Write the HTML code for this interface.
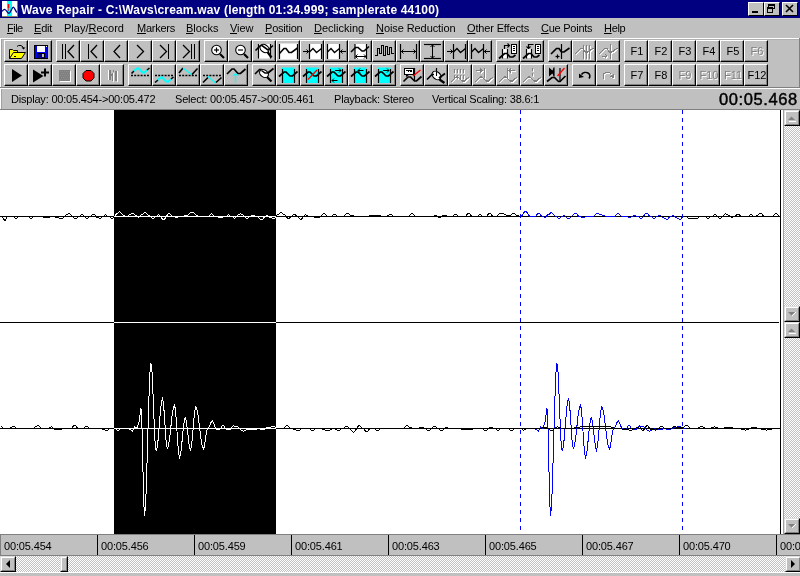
<!DOCTYPE html><html><head><meta charset="utf-8"><style>
*{margin:0;padding:0;box-sizing:border-box}
html,body{width:800px;height:576px;overflow:hidden;background:#c0c0c0;font-family:"Liberation Sans",sans-serif;font-size:11px;color:#000}
.a{position:absolute}
.t{position:absolute;white-space:nowrap;line-height:1;will-change:transform}
.btn{position:absolute;width:24px;height:22px;background:#c0c0c0;border-top:1px solid #fff;border-left:1px solid #fff;border-right:1px solid #000;border-bottom:1px solid #000}
.btn:after{content:"";position:absolute;left:0;top:0;right:0;bottom:0;border-right:1px solid #808080;border-bottom:1px solid #808080}
.btn svg{position:absolute;left:0;top:0}
.btn div{will-change:transform}
.chk{background-color:#fff;background-image:linear-gradient(45deg,#c0c0c0 25%,transparent 25%,transparent 75%,#c0c0c0 75%),linear-gradient(45deg,#c0c0c0 25%,transparent 25%,transparent 75%,#c0c0c0 75%);background-size:2px 2px;background-position:0 0,1px 1px}
.sb{position:absolute;width:16px;height:16px;background:#c0c0c0;border-top:1px solid #dfdfdf;border-left:1px solid #dfdfdf;border-right:1px solid #000;border-bottom:1px solid #000}
.sb:before{content:"";position:absolute;left:0;top:0;right:0;bottom:0;border-top:1px solid #fff;border-left:1px solid #fff;border-right:1px solid #808080;border-bottom:1px solid #808080}
</style></head><body><div class="a" style="left:0;top:0;width:800px;height:18px;background:#000080"></div><svg class="a" style="left:2px;top:1px" width="16" height="16" viewBox="0 0 16 16"><rect x="0" y="0" width="16" height="16" fill="#fff"/><rect x="5" y="0" width="5" height="16" fill="#00ffff"/><path d="M0,10.5 C1,9 2,8.3 3,8.5 C4.5,9 5.5,12.3 7,12.3 C8.5,12.3 10,6.2 11.3,6.2 C12.5,6.2 13.5,10.5 15,11.5" stroke="#000080" fill="none" stroke-width="1.3"/><path d="M6.5,3 L6.5,7" stroke="#ff0000" stroke-width="1.6"/><path d="M6.5,7 L6.5,10" stroke="#c04040" stroke-width="0.8"/><rect x="15" y="0" width="1" height="16" fill="#808060"/><rect x="0" y="15" width="16" height="1" fill="#808060"/></svg><div class="t" style="left:21px;top:4px;color:#fff;font-weight:bold;font-size:12px;letter-spacing:0.18px">Wave Repair - C:\Wavs\cream.wav (length 01:34.999; samplerate 44100)</div><div class="a" style="left:748px;top:2px;width:16px;height:14px;background:#c0c0c0;border-top:1px solid #fff;border-left:1px solid #fff;border-right:1px solid #000;border-bottom:1px solid #000"></div><div class="a" style="left:764px;top:2px;width:16px;height:14px;background:#c0c0c0;border-top:1px solid #fff;border-left:1px solid #fff;border-right:1px solid #000;border-bottom:1px solid #000"></div><div class="a" style="left:782px;top:2px;width:16px;height:14px;background:#c0c0c0;border-top:1px solid #fff;border-left:1px solid #fff;border-right:1px solid #000;border-bottom:1px solid #000"></div><div class="a" style="left:752px;top:11px;width:6px;height:2px;background:#000"></div><svg class="a" style="left:766px;top:4px" width="12" height="10" shape-rendering="crispEdges"><rect x="2" y="0" width="7" height="2" fill="#000"/><rect x="8" y="2" width="1" height="3" fill="#000"/><rect x="2" y="2" width="1" height="1" fill="#000"/><rect x="7" y="4" width="1" height="1" fill="#000"/><rect x="1" y="3" width="6" height="6" fill="#c0c0c0"/><rect x="1" y="3" width="6" height="2" fill="#000"/><rect x="1" y="5" width="1" height="4" fill="#000"/><rect x="6" y="5" width="1" height="4" fill="#000"/><rect x="1" y="8" width="6" height="1" fill="#000"/></svg><svg class="a" style="left:785px;top:4px" width="10" height="10"><path d="M1,1 L8,8 M8,1 L1,8" stroke="#000" stroke-width="1.6"/></svg><div class="t" style="left:7px;top:23px;letter-spacing:-0.5px"><u>F</u>ile</div><div class="t" style="left:34px;top:23px;letter-spacing:-0.2px"><u>E</u>dit</div><div class="t" style="left:64px;top:23px;letter-spacing:0px">Play/<u>R</u>ecord</div><div class="t" style="left:137px;top:23px;letter-spacing:-0.25px"><u>M</u>arkers</div><div class="t" style="left:186px;top:23px;letter-spacing:0px"><u>B</u>locks</div><div class="t" style="left:230px;top:23px;letter-spacing:-0.1px"><u>V</u>iew</div><div class="t" style="left:265px;top:23px;letter-spacing:-0.2px"><u>P</u>osition</div><div class="t" style="left:314px;top:23px;letter-spacing:0px"><u>D</u>eclicking</div><div class="t" style="left:376px;top:23px;letter-spacing:-0.08px"><u>N</u>oise Reduction</div><div class="t" style="left:467px;top:23px;letter-spacing:-0.15px"><u>O</u>ther Effects</div><div class="t" style="left:541px;top:23px;letter-spacing:-0.25px"><u>C</u>ue Points</div><div class="t" style="left:604px;top:23px;letter-spacing:-0.3px"><u>H</u>elp</div><div class="a" style="left:0;top:38px;width:800px;height:1px;background:#fff"></div><div class="a" style="left:1px;top:39px;width:798px;height:1px;background:#b0b0b0"></div><div class="a" style="left:0;top:38px;width:1px;height:72px;background:#fff"></div><div class="a" style="left:1px;top:39px;width:1px;height:71px;background:#a0a0a0"></div><div class="a" style="left:0;top:87px;width:800px;height:1px;background:#808080"></div><div class="a" style="left:0;top:88px;width:800px;height:1px;background:#fff"></div><div class="a" style="left:0;top:109px;width:800px;height:1px;background:#808080"></div><div class="a" style="left:799px;top:38px;width:1px;height:50px;background:#808080"></div><div class="btn" style="left:4px;top:40px"><svg style="position:absolute;left:-1px;top:-1px" width="24" height="22" viewBox="0 0 24 22"><polygon points="5.5,9.5 8.5,9.5 9.5,10.5 13.5,10.5 13.5,12.5 9.5,12.5 5.5,17.5" fill="#ffff00"/><polygon points="9.5,12.5 21.5,12.5 17.5,18.5 5.5,18.5" fill="#ffff00"/><polyline points="5.5,18.5 5.5,9.5 8.5,9.5 9.5,10.5 13.5,10.5 13.5,12.5" fill="none" stroke="#000" stroke-width="1" stroke-linejoin="miter" /><polyline points="5.5,18.5 9.5,12.5 21.5,12.5 17.5,18.5 5.5,18.5" fill="none" stroke="#000" stroke-width="1" stroke-linejoin="miter" /><rect x="10" y="16" width="2" height="1" fill="#000"/><polyline points="13,6.5 14.5,5.5 17,5.5 19,7 19.5,8.5" fill="none" stroke="#000" stroke-width="1" stroke-linejoin="miter" /><polygon points="17.5,7.5 21.5,7.5 19.5,9.5" fill="#000"/></svg></div><div class="btn" style="left:28px;top:40px"><svg style="position:absolute;left:-1px;top:-1px" width="24" height="22" viewBox="0 0 24 22" shape-rendering="crispEdges"><rect x="6" y="5" width="14" height="14" fill="#000"/><rect x="7" y="6" width="12" height="12" fill="#0000ff"/><rect x="9" y="6" width="8" height="6" fill="#fff"/><rect x="18" y="6" width="1" height="1" fill="#fff"/><rect x="9" y="13" width="8" height="5" fill="#000"/><rect x="10" y="14" width="6" height="4" fill="#000080"/><rect x="14" y="14" width="2" height="3" fill="#c0c0c0"/></svg></div><div class="btn" style="left:56px;top:40px"><svg style="position:absolute;left:-1px;top:-1px" width="24" height="22" viewBox="0 0 24 22" shape-rendering="crispEdges"><rect x="6" y="4" width="1" height="15" fill="#000"/><rect x="9" y="4" width="1" height="15" fill="#000"/><polyline points="18,5 12,11.5 18,18" fill="none" stroke="#000" stroke-width="1.3" stroke-linejoin="miter"  shape-rendering="auto"/></svg></div><div class="btn" style="left:80px;top:40px"><svg style="position:absolute;left:-1px;top:-1px" width="24" height="22" viewBox="0 0 24 22" shape-rendering="crispEdges"><rect x="8" y="4" width="1" height="15" fill="#000"/><polyline points="17,5 11,11.5 17,18" fill="none" stroke="#000" stroke-width="1.3" stroke-linejoin="miter"  shape-rendering="auto"/></svg></div><div class="btn" style="left:104px;top:40px"><svg style="position:absolute;left:-1px;top:-1px" width="24" height="22" viewBox="0 0 24 22"><polyline points="16,5 10,11.5 16,18" fill="none" stroke="#000" stroke-width="1.3" stroke-linejoin="miter" /></svg></div><div class="btn" style="left:128px;top:40px"><svg style="position:absolute;left:-1px;top:-1px" width="24" height="22" viewBox="0 0 24 22"><polyline points="9,5 15.5,11.5 9,18" fill="none" stroke="#000" stroke-width="1.3" stroke-linejoin="miter" /></svg></div><div class="btn" style="left:152px;top:40px"><svg style="position:absolute;left:-1px;top:-1px" width="24" height="22" viewBox="0 0 24 22" shape-rendering="crispEdges"><rect x="16" y="4" width="1" height="15" fill="#000"/><polyline points="8,5 14.5,11.5 8,18" fill="none" stroke="#000" stroke-width="1.3" stroke-linejoin="miter"  shape-rendering="auto"/></svg></div><div class="btn" style="left:176px;top:40px"><svg style="position:absolute;left:-1px;top:-1px" width="24" height="22" viewBox="0 0 24 22" shape-rendering="crispEdges"><rect x="15" y="4" width="1" height="15" fill="#000"/><rect x="18" y="4" width="1" height="15" fill="#000"/><polyline points="7,5 13.5,11.5 7,18" fill="none" stroke="#000" stroke-width="1.3" stroke-linejoin="miter"  shape-rendering="auto"/></svg></div><div class="btn" style="left:204px;top:40px"><svg style="position:absolute;left:-1px;top:-1px" width="24" height="22" viewBox="0 0 24 22"><circle cx="12.5" cy="10" r="4.8" fill="#fff" stroke="#000" stroke-width="1.1"/><line x1="16" y1="14" x2="20" y2="18" stroke="#000" stroke-width="2.2" /><line x1="10" y1="10" x2="15" y2="10" stroke="#000" stroke-width="1.2" /><line x1="12.5" y1="7.5" x2="12.5" y2="12.5" stroke="#000" stroke-width="1.2" /></svg></div><div class="btn" style="left:228px;top:40px"><svg style="position:absolute;left:-1px;top:-1px" width="24" height="22" viewBox="0 0 24 22"><circle cx="12.5" cy="10" r="4.8" fill="#fff" stroke="#000" stroke-width="1.1"/><line x1="16" y1="14" x2="20" y2="18" stroke="#000" stroke-width="2.2" /><line x1="10" y1="10" x2="15" y2="10" stroke="#000" stroke-width="1.2" /></svg></div><div class="btn" style="left:252px;top:40px"><svg style="position:absolute;left:-1px;top:-1px" width="24" height="22" viewBox="0 0 24 22"><rect x="6.5" y="4" width="12" height="14.5" fill="#fff"/><line x1="6.5" y1="4" x2="6.5" y2="18.5" stroke="#000" stroke-width="1.2" /><line x1="18.5" y1="4" x2="18.5" y2="18.5" stroke="#000" stroke-width="1.2" /><ellipse cx="12.5" cy="8.5" rx="5" ry="3.6" transform="rotate(35 12.5 8.5)" fill="none" stroke="#000" stroke-width="1.1"/><polyline points="3.5,10.5 8.5,5.5 10,5.5 16,10 21,5.5" fill="none" stroke="#000" stroke-width="1.6" stroke-linejoin="miter" /><line x1="15.5" y1="12" x2="19.5" y2="17.5" stroke="#000" stroke-width="2.2" /></svg></div><div class="btn" style="left:276px;top:40px"><svg style="position:absolute;left:-1px;top:-1px" width="24" height="22" viewBox="0 0 24 22"><rect x="3.5" y="3.5" width="18.5" height="16" fill="#fff"/><line x1="3.5" y1="4" x2="3.5" y2="19" stroke="#000" stroke-width="1.2" /><line x1="21.5" y1="4" x2="21.5" y2="19" stroke="#000" stroke-width="1.2" /><polyline points="3.5,13.5 8,8.5 10,8.5 13,12.5 15.5,12.5 21.5,8" fill="none" stroke="#000" stroke-width="1.6" stroke-linejoin="miter" /></svg></div><div class="btn" style="left:300px;top:40px"><svg style="position:absolute;left:-1px;top:-1px" width="24" height="22" viewBox="0 0 24 22"><rect x="9.5" y="4" width="12" height="15" fill="#fff"/><line x1="9.5" y1="4" x2="9.5" y2="19" stroke="#000" stroke-width="1.2" /><line x1="21.5" y1="4" x2="21.5" y2="19" stroke="#000" stroke-width="1.2" /><polyline points="9.5,12 13,8.5 16.5,12.5 21.5,8.5" fill="none" stroke="#000" stroke-width="1.4" stroke-linejoin="miter" /><line x1="3" y1="11.5" x2="9" y2="11.5" stroke="#000" stroke-width="1.1" /><polyline points="6.5,9.5 8.5,11.5 6.5,13.5" fill="none" stroke="#000" stroke-width="1" stroke-linejoin="miter" /></svg></div><div class="btn" style="left:324px;top:40px"><svg style="position:absolute;left:-1px;top:-1px" width="24" height="22" viewBox="0 0 24 22"><rect x="3.5" y="4" width="12" height="15" fill="#fff"/><line x1="3.5" y1="4" x2="3.5" y2="19" stroke="#000" stroke-width="1.2" /><line x1="15.5" y1="4" x2="15.5" y2="19" stroke="#000" stroke-width="1.2" /><polyline points="3.5,12 7,8.5 10.5,12.5 15.5,8.5" fill="none" stroke="#000" stroke-width="1.4" stroke-linejoin="miter" /><line x1="16" y1="11.5" x2="22" y2="11.5" stroke="#000" stroke-width="1.1" /><polyline points="18.5,9.5 16.5,11.5 18.5,13.5" fill="none" stroke="#000" stroke-width="1" stroke-linejoin="miter" /></svg></div><div class="btn" style="left:348px;top:40px"><svg style="position:absolute;left:-1px;top:-1px" width="24" height="22" viewBox="0 0 24 22"><rect x="7" y="4" width="11.5" height="15" fill="#fff"/><line x1="7" y1="4" x2="7" y2="19" stroke="#000" stroke-width="1.2" /><line x1="18.5" y1="4" x2="18.5" y2="19" stroke="#000" stroke-width="1.2" /><polyline points="3,12 7.5,7.5 10,7.5 14,11 16,11 21,6.5" fill="none" stroke="#000" stroke-width="1.6" stroke-linejoin="miter" /><line x1="7.5" y1="16.5" x2="18" y2="16.5" stroke="#000" stroke-width="1" /><polyline points="9.5,14.5 7.5,16.5 9.5,18.5" fill="none" stroke="#000" stroke-width="1" stroke-linejoin="miter" /><polyline points="16,14.5 18,16.5 16,18.5" fill="none" stroke="#000" stroke-width="1" stroke-linejoin="miter" /></svg></div><div class="btn" style="left:372px;top:40px"><svg style="position:absolute;left:-1px;top:-1px" width="24" height="22" viewBox="0 0 24 22" shape-rendering="crispEdges"><polyline points="3,15.5 5.5,15.5 5.5,8.5 7.5,8.5 7.5,13.5 9.5,13.5 9.5,5.5 11.5,5.5 11.5,15.5 13.5,15.5 13.5,6.5 15.5,6.5 15.5,14.5 17.5,14.5 17.5,7.5 19.5,7.5 19.5,13.5 22,13.5" fill="none" stroke="#000" stroke-width="1" stroke-linejoin="miter" /></svg></div><div class="btn" style="left:396px;top:40px"><svg style="position:absolute;left:-1px;top:-1px" width="24" height="22" viewBox="0 0 24 22"><line x1="4.5" y1="4" x2="4.5" y2="19" stroke="#000" stroke-width="1.2" /><line x1="20.5" y1="4" x2="20.5" y2="19" stroke="#000" stroke-width="1.2" /><line x1="5" y1="11.5" x2="20" y2="11.5" stroke="#000" stroke-width="1" /><polyline points="7.5,9.5 5.5,11.5 7.5,13.5" fill="none" stroke="#000" stroke-width="1" stroke-linejoin="miter" /><polyline points="17.5,9.5 19.5,11.5 17.5,13.5" fill="none" stroke="#000" stroke-width="1" stroke-linejoin="miter" /></svg></div><div class="btn" style="left:420px;top:40px"><svg style="position:absolute;left:-1px;top:-1px" width="24" height="22" viewBox="0 0 24 22"><line x1="4" y1="4.5" x2="21" y2="4.5" stroke="#000" stroke-width="1.2" /><line x1="4" y1="18.5" x2="21" y2="18.5" stroke="#000" stroke-width="1.2" /><line x1="12.5" y1="5" x2="12.5" y2="18" stroke="#000" stroke-width="1" /><polyline points="10.5,7 12.5,5 14.5,7" fill="none" stroke="#000" stroke-width="1" stroke-linejoin="miter" /><polyline points="10.5,16 12.5,18 14.5,16" fill="none" stroke="#000" stroke-width="1" stroke-linejoin="miter" /></svg></div><div class="btn" style="left:444px;top:40px"><svg style="position:absolute;left:-1px;top:-1px" width="24" height="22" viewBox="0 0 24 22"><line x1="9.5" y1="4" x2="9.5" y2="19" stroke="#000" stroke-width="1.2" /><line x1="21.5" y1="4" x2="21.5" y2="19" stroke="#000" stroke-width="1.2" /><polyline points="9.5,12 13,8.5 16.5,12.5 21.5,8.5" fill="none" stroke="#000" stroke-width="1.4" stroke-linejoin="miter" /><line x1="3" y1="11.5" x2="9" y2="11.5" stroke="#000" stroke-width="1.1" /><polyline points="6.5,9.5 8.5,11.5 6.5,13.5" fill="none" stroke="#000" stroke-width="1" stroke-linejoin="miter" /></svg></div><div class="btn" style="left:468px;top:40px"><svg style="position:absolute;left:-1px;top:-1px" width="24" height="22" viewBox="0 0 24 22"><line x1="3.5" y1="4" x2="3.5" y2="19" stroke="#000" stroke-width="1.2" /><line x1="15.5" y1="4" x2="15.5" y2="19" stroke="#000" stroke-width="1.2" /><polyline points="3.5,12 7,8.5 10.5,12.5 15.5,8.5" fill="none" stroke="#000" stroke-width="1.4" stroke-linejoin="miter" /><line x1="16" y1="11.5" x2="22" y2="11.5" stroke="#000" stroke-width="1.1" /><polyline points="18.5,9.5 16.5,11.5 18.5,13.5" fill="none" stroke="#000" stroke-width="1" stroke-linejoin="miter" /></svg></div><div class="btn" style="left:496px;top:40px"><svg style="position:absolute;left:-1px;top:-1px" width="24" height="22" viewBox="0 0 24 22"><rect x="15" y="4" width="6" height="10" fill="#000"/><rect x="16" y="5" width="4" height="8" fill="#fff"/><rect x="17" y="6" width="2" height="1" fill="#000"/><rect x="17" y="8" width="2" height="1" fill="#000"/><rect x="17" y="10" width="2" height="1" fill="#000"/><rect x="6.5" y="9" width="5" height="9" fill="#fff"/><line x1="6.5" y1="9" x2="6.5" y2="18.5" stroke="#000" stroke-width="1.2" /><line x1="11.5" y1="9" x2="11.5" y2="18.5" stroke="#000" stroke-width="1.2" /><polyline points="3,18.5 8.5,13.5 11,13.5 14,17 17,17 19.5,15" fill="none" stroke="#000" stroke-width="1.7" stroke-linejoin="miter" /><polyline points="8.5,9 8.5,5.5 13.5,5.5" fill="none" stroke="#000" stroke-width="1.2" stroke-linejoin="miter" /><polyline points="11.5,3.5 13.5,5.5 11.5,7.5" fill="none" stroke="#000" stroke-width="1.1" stroke-linejoin="miter" /></svg></div><div class="btn" style="left:520px;top:40px"><svg style="position:absolute;left:-1px;top:-1px" width="24" height="22" viewBox="0 0 24 22"><rect x="15" y="4" width="6" height="10" fill="#000"/><rect x="16" y="5" width="4" height="8" fill="#fff"/><rect x="17" y="6" width="2" height="1" fill="#000"/><rect x="17" y="8" width="2" height="1" fill="#000"/><rect x="17" y="10" width="2" height="1" fill="#000"/><rect x="6.5" y="9" width="5" height="9" fill="#fff"/><line x1="6.5" y1="9" x2="6.5" y2="18.5" stroke="#000" stroke-width="1.2" /><line x1="11.5" y1="9" x2="11.5" y2="18.5" stroke="#000" stroke-width="1.2" /><polyline points="3,18.5 8.5,13.5 11,13.5 14,17 17,17 19.5,15" fill="none" stroke="#000" stroke-width="1.7" stroke-linejoin="miter" /><polyline points="13.5,4.5 8.5,4.5 8.5,8.5" fill="none" stroke="#000" stroke-width="1.2" stroke-linejoin="miter" /><polyline points="6.5,6.5 8.5,8.5 10.5,6.5" fill="none" stroke="#000" stroke-width="1.1" stroke-linejoin="miter" /></svg></div><div class="btn" style="left:548px;top:40px"><svg style="position:absolute;left:-1px;top:-1px" width="24" height="22" viewBox="0 0 24 22"><polyline points="3,14 8.5,8.5 11,8.5 13.5,12 16,12 21.5,8" fill="none" stroke="#000" stroke-width="1.7" stroke-linejoin="miter" /><line x1="13.5" y1="4" x2="13.5" y2="19" stroke="#000" stroke-width="1.2" /><line x1="7.5" y1="16.5" x2="11.5" y2="16.5" stroke="#000" stroke-width="1.2" /><line x1="9.5" y1="14.5" x2="9.5" y2="18.5" stroke="#000" stroke-width="1.2" /></svg></div><div class="btn" style="left:572px;top:40px"><svg style="position:absolute;left:-1px;top:-1px" width="24" height="22" viewBox="0 0 24 22" shape-rendering="crispEdges"><polyline points="4,15 9.5,9.5 12,9.5 14.5,13 17,13 22.5,9" fill="none" stroke="#fff" stroke-width="1.1" stroke-linejoin="miter" /><line x1="12" y1="6" x2="12" y2="20" stroke="#fff" stroke-width="1" /><line x1="15" y1="6" x2="15" y2="20" stroke="#fff" stroke-width="1" /><line x1="18" y1="6" x2="18" y2="20" stroke="#fff" stroke-width="1" /><polyline points="3,14 8.5,8.5 11,8.5 13.5,12 16,12 21.5,8" fill="none" stroke="#808080" stroke-width="1.1" stroke-linejoin="miter" /><line x1="11" y1="5" x2="11" y2="19" stroke="#808080" stroke-width="1" /><line x1="14" y1="5" x2="14" y2="19" stroke="#808080" stroke-width="1" /><line x1="17" y1="5" x2="17" y2="19" stroke="#808080" stroke-width="1" /></svg></div><div class="btn" style="left:596px;top:40px"><svg style="position:absolute;left:-1px;top:-1px" width="24" height="22" viewBox="0 0 24 22" shape-rendering="crispEdges"><polyline points="4,15 9.5,9.5 12,9.5 14.5,13 17,13 22.5,9" fill="none" stroke="#fff" stroke-width="1.1" stroke-linejoin="miter" /><line x1="15" y1="5" x2="15" y2="20" stroke="#fff" stroke-width="1" /><line x1="7" y1="17" x2="12" y2="17" stroke="#fff" stroke-width="1" /><polyline points="10,15 12,17 10,19" fill="none" stroke="#fff" stroke-width="1" stroke-linejoin="miter" /><polyline points="3,14 8.5,8.5 11,8.5 13.5,12 16,12 21.5,8" fill="none" stroke="#808080" stroke-width="1.1" stroke-linejoin="miter" /><line x1="14" y1="4" x2="14" y2="19" stroke="#808080" stroke-width="1" /><line x1="6" y1="16" x2="11" y2="16" stroke="#808080" stroke-width="1" /><polyline points="9,14 11,16 9,18" fill="none" stroke="#808080" stroke-width="1" stroke-linejoin="miter" /></svg></div><div class="btn" style="left:624px;top:40px"><div style="position:absolute;left:0;top:4px;width:24px;text-align:center">F1</div></div><div class="btn" style="left:648px;top:40px"><div style="position:absolute;left:0;top:4px;width:24px;text-align:center">F2</div></div><div class="btn" style="left:672px;top:40px"><div style="position:absolute;left:0;top:4px;width:24px;text-align:center">F3</div></div><div class="btn" style="left:696px;top:40px"><div style="position:absolute;left:0;top:4px;width:24px;text-align:center">F4</div></div><div class="btn" style="left:720px;top:40px"><div style="position:absolute;left:0;top:4px;width:24px;text-align:center">F5</div></div><div class="btn" style="left:744px;top:40px"><div style="position:absolute;left:1px;top:5px;width:24px;text-align:center;color:#fff">F6</div><div style="position:absolute;left:0;top:4px;width:24px;text-align:center;color:#808080">F6</div></div><div class="btn" style="left:4px;top:64px"><svg style="position:absolute;left:-1px;top:-1px" width="24" height="22" viewBox="0 0 24 22"><polygon points="8,5 18,11.5 8,18" fill="#000"/></svg></div><div class="btn" style="left:28px;top:64px"><svg style="position:absolute;left:-1px;top:-1px" width="24" height="22" viewBox="0 0 24 22"><polygon points="5,5.5 15.5,12 5,18.5" fill="#000"/><line x1="13" y1="8.5" x2="21" y2="8.5" stroke="#000" stroke-width="2" /><line x1="17" y1="4.5" x2="17" y2="12.5" stroke="#000" stroke-width="2" /></svg></div><div class="btn" style="left:52px;top:64px"><svg style="position:absolute;left:-1px;top:-1px" width="24" height="22" viewBox="0 0 24 22" shape-rendering="crispEdges"><rect x="8" y="7" width="11" height="11" fill="#fff"/><rect x="7" y="6" width="11" height="11" fill="#808080"/><rect x="8" y="7" width="1" height="1" fill="#8e8e8e"/><rect x="9" y="9" width="1" height="1" fill="#8e8e8e"/><rect x="8" y="11" width="1" height="1" fill="#8e8e8e"/><rect x="9" y="13" width="1" height="1" fill="#8e8e8e"/><rect x="8" y="15" width="1" height="1" fill="#8e8e8e"/><rect x="10" y="7" width="1" height="1" fill="#8e8e8e"/><rect x="11" y="9" width="1" height="1" fill="#8e8e8e"/><rect x="10" y="11" width="1" height="1" fill="#8e8e8e"/><rect x="11" y="13" width="1" height="1" fill="#8e8e8e"/><rect x="10" y="15" width="1" height="1" fill="#8e8e8e"/><rect x="12" y="7" width="1" height="1" fill="#8e8e8e"/><rect x="13" y="9" width="1" height="1" fill="#8e8e8e"/><rect x="12" y="11" width="1" height="1" fill="#8e8e8e"/><rect x="13" y="13" width="1" height="1" fill="#8e8e8e"/><rect x="12" y="15" width="1" height="1" fill="#8e8e8e"/><rect x="14" y="7" width="1" height="1" fill="#8e8e8e"/><rect x="15" y="9" width="1" height="1" fill="#8e8e8e"/><rect x="14" y="11" width="1" height="1" fill="#8e8e8e"/><rect x="15" y="13" width="1" height="1" fill="#8e8e8e"/><rect x="14" y="15" width="1" height="1" fill="#8e8e8e"/><rect x="16" y="7" width="1" height="1" fill="#8e8e8e"/><rect x="17" y="9" width="1" height="1" fill="#8e8e8e"/><rect x="16" y="11" width="1" height="1" fill="#8e8e8e"/><rect x="17" y="13" width="1" height="1" fill="#8e8e8e"/><rect x="16" y="15" width="1" height="1" fill="#8e8e8e"/></svg></div><div class="btn" style="left:76px;top:64px"><svg style="position:absolute;left:-1px;top:-1px" width="24" height="22" viewBox="0 0 24 22"><polygon points="10,6.5 15,6.5 18,9.5 18,14 15,17 10,17 7,14 7,9.5" fill="#ff0000" stroke="#000" stroke-width="1"/></svg></div><div class="btn" style="left:100px;top:64px"><svg style="position:absolute;left:-1px;top:-1px" width="24" height="22" viewBox="0 0 24 22" shape-rendering="crispEdges"><rect x="8" y="6" width="1" height="10" fill="#fff"/><rect x="9" y="6" width="2" height="10" fill="#808080"/><rect x="12" y="9" width="1" height="8" fill="#808080"/><rect x="13" y="9" width="1" height="9" fill="#fff"/><rect x="11" y="10" width="1" height="2" fill="#808080"/><rect x="15" y="7" width="2" height="10" fill="#808080"/><rect x="17" y="7" width="1" height="11" fill="#fff"/><rect x="13" y="6" width="1" height="2" fill="#808080"/></svg></div><div class="btn" style="left:128px;top:64px"><svg style="position:absolute;left:-1px;top:-1px" width="24" height="22" viewBox="0 0 24 22"><line x1="3" y1="11.5" x2="22" y2="11.5" stroke="#000" stroke-width="1.4" stroke-dasharray="2 1.2"/><polyline points="3.5,9.5 6,7" fill="none" stroke="#000" stroke-width="1.6" stroke-linejoin="miter" /><polyline points="6,7 9,4.5 11,4.5 14.5,8.5 16.5,8.5 19,6" fill="none" stroke="#00ffff" stroke-width="2" stroke-linejoin="miter" /><polyline points="19,6 21.5,4" fill="none" stroke="#000" stroke-width="1.6" stroke-linejoin="miter" /></svg></div><div class="btn" style="left:152px;top:64px"><svg style="position:absolute;left:-1px;top:-1px" width="24" height="22" viewBox="0 0 24 22"><line x1="3" y1="11.5" x2="22" y2="11.5" stroke="#000" stroke-width="1.4" stroke-dasharray="2 1.2"/><polyline points="3,18.5 6,16" fill="none" stroke="#000" stroke-width="1.6" stroke-linejoin="miter" /><polyline points="6,16 8.5,13.5 10.5,13.5 14,17.5 16.5,17.5 19,15" fill="none" stroke="#00ffff" stroke-width="2" stroke-linejoin="miter" /><polyline points="19,15 21.5,13" fill="none" stroke="#000" stroke-width="1.6" stroke-linejoin="miter" /></svg></div><div class="btn" style="left:176px;top:64px"><svg style="position:absolute;left:-1px;top:-1px" width="24" height="22" viewBox="0 0 24 22"><line x1="3" y1="11.5" x2="22" y2="11.5" stroke="#000" stroke-width="1.4" stroke-dasharray="2 1.2"/><polyline points="3,9 7,4" fill="none" stroke="#000" stroke-width="1.6" stroke-linejoin="miter" /><polyline points="7,4 15.5,10.5" fill="none" stroke="#00ffff" stroke-width="1.2" stroke-linejoin="miter" /><polyline points="16,10.5 21.5,4.5" fill="none" stroke="#000" stroke-width="1.6" stroke-linejoin="miter" /></svg></div><div class="btn" style="left:200px;top:64px"><svg style="position:absolute;left:-1px;top:-1px" width="24" height="22" viewBox="0 0 24 22"><line x1="3" y1="11.5" x2="22" y2="11.5" stroke="#000" stroke-width="1.4" stroke-dasharray="2 1.2"/><polyline points="3,18.5 8,13.5" fill="none" stroke="#000" stroke-width="1.6" stroke-linejoin="miter" /><polyline points="8,12.5 15.5,19" fill="none" stroke="#00ffff" stroke-width="1.2" stroke-linejoin="miter" /><polyline points="16,18.5 21.5,13.5" fill="none" stroke="#000" stroke-width="1.6" stroke-linejoin="miter" /></svg></div><div class="btn" style="left:224px;top:64px"><svg style="position:absolute;left:-1px;top:-1px" width="24" height="22" viewBox="0 0 24 22"><polyline points="3,10 8,5 10,5 14,9.5 16.5,9.5 21.5,5" fill="none" stroke="#000" stroke-width="1.7" stroke-linejoin="miter" /><line x1="11.5" y1="9.5" x2="11.5" y2="18.5" stroke="#00ffff" stroke-width="1.3" /><polyline points="9,12 11.5,9.5 14,12" fill="none" stroke="#00ffff" stroke-width="1.2" stroke-linejoin="miter" /></svg></div><div class="btn" style="left:252px;top:64px"><svg style="position:absolute;left:-1px;top:-1px" width="24" height="22" viewBox="0 0 24 22"><polyline points="3,10 7.5,5.5 9.5,5.5 13,9 16,9 21.5,4.5" fill="none" stroke="#000" stroke-width="1.7" stroke-linejoin="miter" /><ellipse cx="12" cy="9.5" rx="4.8" ry="3.5" transform="rotate(35 12 9.5)" fill="#fff" stroke="#000" stroke-width="1.2"/><polyline points="9.5,6.5 13,9 16,9 19,6.5" fill="none" stroke="#000" stroke-width="1.5" stroke-linejoin="miter" /><line x1="15" y1="13" x2="19.5" y2="17.5" stroke="#000" stroke-width="2.2" /></svg></div><div class="btn" style="left:276px;top:64px"><svg style="position:absolute;left:-1px;top:-1px" width="24" height="22" viewBox="0 0 24 22"><rect x="6" y="3.5" width="12.5" height="15.5" fill="#00ffff"/><line x1="6.5" y1="5" x2="6.5" y2="19" stroke="#000" stroke-width="1.2" /><line x1="18.5" y1="5" x2="18.5" y2="19" stroke="#000" stroke-width="1.2" /><polyline points="3,12.5 8,8 10,8 14,12 16.5,12 21.5,7.5" fill="none" stroke="#000" stroke-width="1.7" stroke-linejoin="miter" /></svg></div><div class="btn" style="left:300px;top:64px"><svg style="position:absolute;left:-1px;top:-1px" width="24" height="22" viewBox="0 0 24 22"><rect x="6" y="3.5" width="12.5" height="15.5" fill="#00ffff"/><line x1="6.5" y1="5" x2="6.5" y2="19" stroke="#000" stroke-width="1.2" /><line x1="18.5" y1="5" x2="18.5" y2="19" stroke="#000" stroke-width="1.2" /><polyline points="3,12.5 8,8 10,8 14,12 16.5,12 21.5,7.5" fill="none" stroke="#000" stroke-width="1.7" stroke-linejoin="miter" /><line x1="8" y1="15.5" x2="17" y2="6" stroke="#ff0000" stroke-width="1.4" /></svg></div><div class="btn" style="left:324px;top:64px"><svg style="position:absolute;left:-1px;top:-1px" width="24" height="22" viewBox="0 0 24 22"><rect x="6" y="3.5" width="12.5" height="15.5" fill="#00ffff"/><line x1="6.5" y1="5" x2="6.5" y2="19" stroke="#000" stroke-width="1.2" /><line x1="18.5" y1="5" x2="18.5" y2="19" stroke="#000" stroke-width="1.2" /><polyline points="3,12.5 8,8 10,8 14,12 16.5,12 21.5,7.5" fill="none" stroke="#000" stroke-width="1.7" stroke-linejoin="miter" /><line x1="11" y1="6.5" x2="17" y2="6.5" stroke="#000" stroke-width="1" /><polyline points="15,4.5 17,6.5 15,8.5" fill="none" stroke="#000" stroke-width="1" stroke-linejoin="miter" /><line x1="8" y1="16.5" x2="13.5" y2="16.5" stroke="#000" stroke-width="1" /><polyline points="10,14.5 8,16.5 10,18.5" fill="none" stroke="#000" stroke-width="1" stroke-linejoin="miter" /></svg></div><div class="btn" style="left:348px;top:64px"><svg style="position:absolute;left:-1px;top:-1px" width="24" height="22" viewBox="0 0 24 22"><rect x="6" y="3.5" width="12.5" height="15.5" fill="#00ffff"/><line x1="6.5" y1="5" x2="6.5" y2="19" stroke="#000" stroke-width="1.2" /><line x1="18.5" y1="5" x2="18.5" y2="19" stroke="#000" stroke-width="1.2" /><polyline points="3,12.5 8,8 10,8 14,12 16.5,12 21.5,7.5" fill="none" stroke="#000" stroke-width="1.7" stroke-linejoin="miter" /><line x1="10" y1="6.5" x2="15.5" y2="6.5" stroke="#000" stroke-width="1" /><polyline points="12,4.5 10,6.5 12,8.5" fill="none" stroke="#000" stroke-width="1" stroke-linejoin="miter" /></svg></div><div class="btn" style="left:372px;top:64px"><svg style="position:absolute;left:-1px;top:-1px" width="24" height="22" viewBox="0 0 24 22"><rect x="6" y="3.5" width="12.5" height="15.5" fill="#00ffff"/><line x1="6.5" y1="5" x2="6.5" y2="19" stroke="#000" stroke-width="1.2" /><line x1="18.5" y1="5" x2="18.5" y2="19" stroke="#000" stroke-width="1.2" /><polyline points="3,12.5 8,8 10,8 14,12 16.5,12 21.5,7.5" fill="none" stroke="#000" stroke-width="1.7" stroke-linejoin="miter" /><line x1="11" y1="6.5" x2="17" y2="6.5" stroke="#000" stroke-width="1" /><polyline points="15,4.5 17,6.5 15,8.5" fill="none" stroke="#000" stroke-width="1" stroke-linejoin="miter" /></svg></div><div class="btn" style="left:400px;top:64px"><svg style="position:absolute;left:-1px;top:-1px" width="24" height="22" viewBox="0 0 24 22"><rect x="4" y="4" width="10" height="7" fill="#000"/><rect x="5" y="5" width="8" height="5" fill="#fff"/><rect x="6" y="6" width="1" height="1" fill="#000"/><rect x="8" y="7" width="1" height="1" fill="#000"/><rect x="10" y="7" width="2" height="1" fill="#000"/><rect x="7" y="6" width="5" height="1" fill="#000"/><polygon points="6,11 9,11 6,13" fill="#000"/><line x1="14.5" y1="4" x2="14.5" y2="17" stroke="#000" stroke-width="1.2" /><polyline points="3.5,17.5 8,13 10.5,13 14.5,17 16.5,17 21.5,12.5" fill="none" stroke="#000" stroke-width="1.7" stroke-linejoin="miter" /><line x1="13" y1="12" x2="20.5" y2="6" stroke="#ff0000" stroke-width="1.4" /></svg></div><div class="btn" style="left:424px;top:64px"><svg style="position:absolute;left:-1px;top:-1px" width="24" height="22" viewBox="0 0 24 22"><line x1="12.5" y1="4" x2="12.5" y2="12" stroke="#000" stroke-width="1.2" /><ellipse cx="12.5" cy="11.5" rx="5" ry="3.6" transform="rotate(40 12.5 11.5)" fill="#fff" stroke="#000" stroke-width="1.1"/><polyline points="3,15.5 8,10.5 10,10.5" fill="none" stroke="#000" stroke-width="1.7" stroke-linejoin="miter" /><line x1="12.5" y1="8" x2="12.5" y2="12" stroke="#000" stroke-width="1.1" /><polyline points="15,14 21,9.5" fill="none" stroke="#000" stroke-width="1.7" stroke-linejoin="miter" /><line x1="15.5" y1="15.5" x2="20.5" y2="19" stroke="#000" stroke-width="2.2" /></svg></div><div class="btn" style="left:448px;top:64px"><svg style="position:absolute;left:-1px;top:-1px" width="24" height="22" viewBox="0 0 24 22" shape-rendering="crispEdges"><polyline points="4,19 9,14 11,14 15,18 17.5,18 22.5,13.5" fill="none" stroke="#fff" stroke-width="1.1" stroke-linejoin="miter" /><line x1="7.5" y1="6" x2="7.5" y2="17" stroke="#fff" stroke-width="1.1" stroke-dasharray="4 1.5"/><line x1="10.5" y1="6" x2="10.5" y2="17" stroke="#fff" stroke-width="1.1" stroke-dasharray="4 1.5"/><line x1="13.5" y1="6" x2="13.5" y2="17" stroke="#fff" stroke-width="1.1" stroke-dasharray="4 1.5"/><line x1="16.5" y1="6" x2="16.5" y2="17" stroke="#fff" stroke-width="1.1" stroke-dasharray="4 1.5"/><polyline points="3,18 8,13 10,13 14,17 16.5,17 21.5,12.5" fill="none" stroke="#808080" stroke-width="1.1" stroke-linejoin="miter" /><line x1="6.5" y1="5" x2="6.5" y2="16" stroke="#808080" stroke-width="1.1" stroke-dasharray="4 1.5"/><line x1="9.5" y1="5" x2="9.5" y2="16" stroke="#808080" stroke-width="1.1" stroke-dasharray="4 1.5"/><line x1="12.5" y1="5" x2="12.5" y2="16" stroke="#808080" stroke-width="1.1" stroke-dasharray="4 1.5"/><line x1="15.5" y1="5" x2="15.5" y2="16" stroke="#808080" stroke-width="1.1" stroke-dasharray="4 1.5"/></svg></div><div class="btn" style="left:472px;top:64px"><svg style="position:absolute;left:-1px;top:-1px" width="24" height="22" viewBox="0 0 24 22" shape-rendering="crispEdges"><polyline points="4,19 9,14 11,14 15,18 17.5,18 22.5,13.5" fill="none" stroke="#fff" stroke-width="1.1" stroke-linejoin="miter" /><line x1="13.5" y1="5" x2="13.5" y2="15" stroke="#fff" stroke-width="1" /><line x1="5" y1="7.5" x2="11" y2="7.5" stroke="#fff" stroke-width="1" /><polyline points="9,5.5 11,7.5 9,9.5" fill="none" stroke="#fff" stroke-width="1" stroke-linejoin="miter" /><polyline points="3,18 8,13 10,13 14,17 16.5,17 21.5,12.5" fill="none" stroke="#808080" stroke-width="1.1" stroke-linejoin="miter" /><line x1="12.5" y1="4" x2="12.5" y2="14" stroke="#808080" stroke-width="1" /><line x1="4" y1="6.5" x2="10" y2="6.5" stroke="#808080" stroke-width="1" /><polyline points="8,4.5 10,6.5 8,8.5" fill="none" stroke="#808080" stroke-width="1" stroke-linejoin="miter" /></svg></div><div class="btn" style="left:496px;top:64px"><svg style="position:absolute;left:-1px;top:-1px" width="24" height="22" viewBox="0 0 24 22" shape-rendering="crispEdges"><polyline points="4,19 9,14 11,14 15,18 17.5,18 22.5,13.5" fill="none" stroke="#fff" stroke-width="1.1" stroke-linejoin="miter" /><line x1="12.5" y1="5" x2="12.5" y2="15" stroke="#fff" stroke-width="1" /><line x1="14" y1="7.5" x2="20" y2="7.5" stroke="#fff" stroke-width="1" /><polyline points="16,5.5 14,7.5 16,9.5" fill="none" stroke="#fff" stroke-width="1" stroke-linejoin="miter" /><polyline points="3,18 8,13 10,13 14,17 16.5,17 21.5,12.5" fill="none" stroke="#808080" stroke-width="1.1" stroke-linejoin="miter" /><line x1="11.5" y1="4" x2="11.5" y2="14" stroke="#808080" stroke-width="1" /><line x1="13" y1="6.5" x2="19" y2="6.5" stroke="#808080" stroke-width="1" /><polyline points="15,4.5 13,6.5 15,8.5" fill="none" stroke="#808080" stroke-width="1" stroke-linejoin="miter" /></svg></div><div class="btn" style="left:520px;top:64px"><svg style="position:absolute;left:-1px;top:-1px" width="24" height="22" viewBox="0 0 24 22" shape-rendering="crispEdges"><polyline points="4,19 9,14 11,14 15,18 17.5,18 22.5,13.5" fill="none" stroke="#fff" stroke-width="1.1" stroke-linejoin="miter" /><line x1="13" y1="5" x2="13" y2="15" stroke="#fff" stroke-width="1" stroke-dasharray="3 2"/><polyline points="3,18 8,13 10,13 14,17 16.5,17 21.5,12.5" fill="none" stroke="#808080" stroke-width="1.1" stroke-linejoin="miter" /><line x1="12" y1="4" x2="12" y2="14" stroke="#808080" stroke-width="1" stroke-dasharray="3 2"/></svg></div><div class="btn" style="left:544px;top:64px"><svg style="position:absolute;left:-1px;top:-1px" width="24" height="22" viewBox="0 0 24 22"><polygon points="5,3.5 10,8 5,12.5" fill="#000"/><polygon points="10,3.5 10,12.5 7.5,8" fill="#000"/><line x1="10" y1="3.5" x2="10" y2="12.5" stroke="#000" stroke-width="1.2" /><line x1="16" y1="4" x2="16" y2="18" stroke="#000" stroke-width="1.2" /><polyline points="3,17.5 8,13.5 10.5,13.5 14.5,17.5 16,17.5 21.5,12" fill="none" stroke="#000" stroke-width="1.7" stroke-linejoin="miter" /><line x1="13.5" y1="12" x2="20.5" y2="4" stroke="#ff0000" stroke-width="1.4" /></svg></div><div class="btn" style="left:572px;top:64px"><svg style="position:absolute;left:-1px;top:-1px" width="24" height="22" viewBox="0 0 24 22"><path d="M9.5,10.5 C11,8.5 14,8 16,9 C18,10 18.5,12.5 17,14.5" fill="none" stroke="#000" stroke-width="1.6"/><polygon points="7,9.5 12,13 7,14" fill="#000"/></svg></div><div class="btn" style="left:596px;top:64px"><svg style="position:absolute;left:-1px;top:-1px" width="24" height="22" viewBox="0 0 24 22" shape-rendering="crispEdges"><path d="M16.5,11.5 C15,9.5 12,9 10,10 C8,11 7.5,13.5 9,15.5" fill="none" stroke="#fff" stroke-width="1.2"/><polygon points="19,10.5 14,14 19,15" fill="#fff"/><path d="M15.5,10.5 C14,8.5 11,8 9,9 C7,10 6.5,12.5 8,14.5" fill="none" stroke="#808080" stroke-width="1.2"/><polygon points="18,9.5 13,13 18,14" fill="#808080"/></svg></div><div class="btn" style="left:624px;top:64px"><div style="position:absolute;left:0;top:4px;width:24px;text-align:center">F7</div></div><div class="btn" style="left:648px;top:64px"><div style="position:absolute;left:0;top:4px;width:24px;text-align:center">F8</div></div><div class="btn" style="left:672px;top:64px"><div style="position:absolute;left:1px;top:5px;width:24px;text-align:center;color:#fff">F9</div><div style="position:absolute;left:0;top:4px;width:24px;text-align:center;color:#808080">F9</div></div><div class="btn" style="left:696px;top:64px"><div style="position:absolute;left:1px;top:5px;width:24px;text-align:center;color:#fff">F10</div><div style="position:absolute;left:0;top:4px;width:24px;text-align:center;color:#808080">F10</div></div><div class="btn" style="left:720px;top:64px"><div style="position:absolute;left:1px;top:5px;width:24px;text-align:center;color:#fff">F11</div><div style="position:absolute;left:0;top:4px;width:24px;text-align:center;color:#808080">F11</div></div><div class="btn" style="left:744px;top:64px"><div style="position:absolute;left:0;top:4px;width:24px;text-align:center">F12</div></div><div class="t" style="left:11px;top:94px;letter-spacing:-0.2px">Display: 00:05.454-&gt;00:05.472</div><div class="t" style="left:175px;top:94px;letter-spacing:-0.2px">Select: 00:05.457-&gt;00:05.461</div><div class="t" style="left:334px;top:94px;letter-spacing:-0.2px">Playback: Stereo</div><div class="t" style="left:432px;top:94px;letter-spacing:-0.2px">Vertical Scaling: 38.6:1</div><div class="t" style="left:719px;top:91px;font-size:16.5px;-webkit-text-stroke:0.45px #000;letter-spacing:0.6px">00:05.468</div><div class="a" style="left:0;top:110px;width:780px;height:424px;background:#fff"></div><div class="a" style="left:114px;top:110px;width:162px;height:424px;background:#000"></div><div class="a" style="left:780px;top:110px;width:1px;height:424px;background:#000"></div><div class="a" style="left:781px;top:110px;width:2px;height:424px;background:#fff"></div><div class="a" style="left:783px;top:110px;width:1px;height:424px;background:#a0a0a0"></div><div class="a chk" style="left:784px;top:110px;width:16px;height:424px"></div><svg class="a" style="left:0;top:110px" width="780" height="424" viewBox="0 110 780 424" shape-rendering="crispEdges"><defs><clipPath id="cb"><rect x="114" y="110" width="162" height="424"/></clipPath><clipPath id="cm"><rect x="521" y="110" width="161" height="424"/></clipPath><clipPath id="cn"><path d="M0,110 H114 V534 H0 Z M276,110 H521 V534 H276 Z M682,110 H780 V534 H682 Z"/></clipPath></defs><rect x="0" y="322" width="779" height="1" fill="#000"/><rect x="114" y="322" width="162" height="1" fill="#fff"/><rect x="0" y="216" width="780" height="1" fill="#000"/><rect x="114" y="216" width="162" height="1" fill="#fff"/><polyline points="0.5,216.5 1.5,216.5 2.5,217.5 3.5,218.5 4.5,220.5 5.5,220.5 6.5,217.5 7.5,216.5 8.5,216.5 9.5,216.5 10.5,216.5 11.5,216.5 12.5,216.5 13.5,216.5 14.5,217.5 15.5,218.5 16.5,218.5 17.5,217.5 18.5,216.5 19.5,216.5 20.5,216.5 21.5,216.5 22.5,216.5 23.5,216.5 24.5,216.5 25.5,216.5 26.5,216.5 27.5,216.5 28.5,216.5 29.5,217.5 30.5,218.5 31.5,218.5 32.5,217.5 33.5,216.5 34.5,216.5 35.5,216.5 36.5,216.5 37.5,216.5 38.5,216.5 39.5,216.5 40.5,216.5 41.5,216.5 42.5,216.5 43.5,217.5 44.5,217.5 45.5,217.5 46.5,217.5 47.5,217.5 48.5,217.5 49.5,217.5 50.5,216.5 51.5,216.5 52.5,216.5 53.5,216.5 54.5,216.5 55.5,217.5 56.5,217.5 57.5,217.5 58.5,217.5 59.5,218.5 60.5,218.5 61.5,218.5 62.5,218.5 63.5,217.5 64.5,216.5 65.5,215.5 66.5,214.5 67.5,214.5 68.5,213.5 69.5,213.5 70.5,214.5 71.5,215.5 72.5,216.5 73.5,217.5 74.5,218.5 75.5,218.5 76.5,218.5 77.5,217.5 78.5,216.5 79.5,216.5 80.5,215.5 81.5,214.5 82.5,214.5 83.5,215.5 84.5,216.5 85.5,217.5 86.5,218.5 87.5,218.5 88.5,217.5 89.5,216.5 90.5,216.5 91.5,215.5 92.5,214.5 93.5,214.5 94.5,214.5 95.5,215.5 96.5,217.5 97.5,217.5 98.5,217.5 99.5,218.5 100.5,218.5 101.5,217.5 102.5,216.5 103.5,216.5 104.5,215.5 105.5,214.5 106.5,215.5 107.5,216.5 108.5,216.5 109.5,216.5 110.5,217.5 111.5,218.5 112.5,218.5 113.5,217.5 114.5,216.5 115.5,215.5 116.5,213.5 117.5,213.5 118.5,212.5 119.5,211.5 120.5,212.5 121.5,213.5 122.5,214.5 123.5,215.5 124.5,215.5 125.5,216.5 126.5,216.5 127.5,216.5 128.5,215.5 129.5,214.5 130.5,214.5 131.5,213.5 132.5,213.5 133.5,213.5 134.5,214.5 135.5,215.5 136.5,215.5 137.5,216.5 138.5,217.5 139.5,216.5 140.5,215.5 141.5,214.5 142.5,214.5 143.5,213.5 144.5,212.5 145.5,212.5 146.5,213.5 147.5,214.5 148.5,215.5 149.5,215.5 150.5,216.5 151.5,217.5 152.5,218.5 153.5,218.5 154.5,217.5 155.5,216.5 156.5,216.5 157.5,215.5 158.5,214.5 159.5,215.5 160.5,216.5 161.5,217.5 162.5,219.5 163.5,219.5 164.5,219.5 165.5,217.5 166.5,216.5 167.5,214.5 168.5,213.5 169.5,213.5 170.5,214.5 171.5,215.5 172.5,216.5 173.5,216.5 174.5,216.5 175.5,217.5 176.5,217.5 177.5,217.5 178.5,216.5 179.5,216.5 180.5,216.5 181.5,216.5 182.5,216.5 183.5,216.5 184.5,215.5 185.5,215.5 186.5,215.5 187.5,215.5 188.5,214.5 189.5,213.5 190.5,212.5 191.5,212.5 192.5,212.5 193.5,212.5 194.5,213.5 195.5,214.5 196.5,215.5 197.5,215.5 198.5,216.5 199.5,216.5 200.5,216.5 201.5,216.5 202.5,216.5 203.5,216.5 204.5,216.5 205.5,216.5 206.5,216.5 207.5,216.5 208.5,216.5 209.5,215.5 210.5,214.5 211.5,213.5 212.5,214.5 213.5,215.5 214.5,216.5 215.5,216.5 216.5,216.5 217.5,216.5 218.5,217.5 219.5,217.5 220.5,217.5 221.5,217.5 222.5,217.5 223.5,216.5 224.5,216.5 225.5,216.5 226.5,216.5 227.5,215.5 228.5,214.5 229.5,215.5 230.5,216.5 231.5,216.5 232.5,216.5 233.5,217.5 234.5,218.5 235.5,217.5 236.5,216.5 237.5,215.5 238.5,214.5 239.5,214.5 240.5,213.5 241.5,214.5 242.5,214.5 243.5,215.5 244.5,216.5 245.5,217.5 246.5,218.5 247.5,218.5 248.5,217.5 249.5,216.5 250.5,216.5 251.5,215.5 252.5,215.5 253.5,215.5 254.5,215.5 255.5,216.5 256.5,216.5 257.5,216.5 258.5,217.5 259.5,218.5 260.5,219.5 261.5,219.5 262.5,219.5 263.5,218.5 264.5,216.5 265.5,216.5 266.5,215.5 267.5,215.5 268.5,216.5 269.5,217.5 270.5,217.5 271.5,217.5 272.5,218.5 273.5,218.5 274.5,218.5 275.5,217.5 276.5,215.5 277.5,214.5 278.5,214.5 279.5,213.5 280.5,212.5 281.5,212.5 282.5,213.5 283.5,214.5 284.5,214.5 285.5,215.5 286.5,216.5 287.5,218.5 288.5,218.5 289.5,218.5 290.5,216.5 291.5,216.5 292.5,215.5 293.5,214.5 294.5,214.5 295.5,214.5 296.5,216.5 297.5,216.5 298.5,217.5 299.5,218.5 300.5,219.5 301.5,219.5 302.5,217.5 303.5,216.5 304.5,215.5 305.5,214.5 306.5,215.5 307.5,215.5 308.5,216.5 309.5,216.5 310.5,216.5 311.5,216.5 312.5,216.5 313.5,216.5 314.5,217.5 315.5,217.5 316.5,217.5 317.5,217.5 318.5,217.5 319.5,217.5 320.5,216.5 321.5,215.5 322.5,214.5 323.5,213.5 324.5,213.5 325.5,214.5 326.5,215.5 327.5,216.5 328.5,216.5 329.5,216.5 330.5,216.5 331.5,216.5 332.5,215.5 333.5,214.5 334.5,214.5 335.5,214.5 336.5,215.5 337.5,216.5 338.5,216.5 339.5,216.5 340.5,216.5 341.5,216.5 342.5,216.5 343.5,216.5 344.5,215.5 345.5,214.5 346.5,213.5 347.5,213.5 348.5,213.5 349.5,214.5 350.5,215.5 351.5,215.5 352.5,215.5 353.5,215.5 354.5,216.5 355.5,216.5 356.5,216.5 357.5,216.5 358.5,216.5 359.5,216.5 360.5,216.5 361.5,216.5 362.5,216.5 363.5,216.5 364.5,216.5 365.5,216.5 366.5,216.5 367.5,216.5 368.5,216.5 369.5,215.5 370.5,215.5 371.5,215.5 372.5,215.5 373.5,215.5 374.5,215.5 375.5,215.5 376.5,215.5 377.5,215.5 378.5,215.5 379.5,215.5 380.5,215.5 381.5,216.5 382.5,216.5 383.5,216.5 384.5,216.5 385.5,216.5 386.5,216.5 387.5,215.5 388.5,215.5 389.5,214.5 390.5,214.5 391.5,214.5 392.5,215.5 393.5,216.5 394.5,216.5 395.5,216.5 396.5,216.5 397.5,216.5 398.5,216.5 399.5,216.5 400.5,216.5 401.5,216.5 402.5,216.5 403.5,216.5 404.5,216.5 405.5,216.5 406.5,216.5 407.5,216.5 408.5,216.5 409.5,215.5 410.5,214.5 411.5,213.5 412.5,213.5 413.5,214.5 414.5,215.5 415.5,216.5 416.5,216.5 417.5,216.5 418.5,216.5 419.5,216.5 420.5,216.5 421.5,216.5 422.5,216.5 423.5,216.5 424.5,216.5 425.5,216.5 426.5,216.5 427.5,216.5 428.5,216.5 429.5,216.5 430.5,216.5 431.5,216.5 432.5,216.5 433.5,216.5 434.5,215.5 435.5,215.5 436.5,215.5 437.5,216.5 438.5,217.5 439.5,217.5 440.5,217.5 441.5,216.5 442.5,215.5 443.5,215.5 444.5,215.5 445.5,215.5 446.5,215.5 447.5,216.5 448.5,216.5 449.5,216.5 450.5,216.5 451.5,216.5 452.5,216.5 453.5,215.5 454.5,214.5 455.5,214.5 456.5,214.5 457.5,215.5 458.5,216.5 459.5,216.5 460.5,216.5 461.5,216.5 462.5,216.5 463.5,216.5 464.5,216.5 465.5,216.5 466.5,215.5 467.5,213.5 468.5,213.5 469.5,213.5 470.5,214.5 471.5,216.5 472.5,216.5 473.5,216.5 474.5,216.5 475.5,216.5 476.5,216.5 477.5,216.5 478.5,215.5 479.5,214.5 480.5,214.5 481.5,215.5 482.5,216.5 483.5,216.5 484.5,216.5 485.5,216.5 486.5,216.5 487.5,215.5 488.5,213.5 489.5,213.5 490.5,213.5 491.5,214.5 492.5,216.5 493.5,216.5 494.5,216.5 495.5,216.5 496.5,216.5 497.5,215.5 498.5,214.5 499.5,213.5 500.5,213.5 501.5,213.5 502.5,213.5 503.5,213.5 504.5,214.5 505.5,214.5 506.5,215.5 507.5,215.5 508.5,215.5 509.5,215.5 510.5,215.5 511.5,214.5 512.5,213.5 513.5,213.5 514.5,213.5 515.5,214.5 516.5,215.5 517.5,215.5 518.5,215.5 519.5,216.5 520.5,216.5 521.5,216.5 522.5,214.5 523.5,213.5 524.5,211.5 525.5,211.5 526.5,211.5 527.5,213.5 528.5,214.5 529.5,216.5 530.5,216.5 531.5,216.5 532.5,216.5 533.5,216.5 534.5,216.5 535.5,216.5 536.5,215.5 537.5,213.5 538.5,213.5 539.5,213.5 540.5,214.5 541.5,216.5 542.5,216.5 543.5,216.5 544.5,217.5 545.5,217.5 546.5,216.5 547.5,214.5 548.5,214.5 549.5,214.5 550.5,212.5 551.5,212.5 552.5,213.5 553.5,214.5 554.5,215.5 555.5,216.5 556.5,216.5 557.5,217.5 558.5,218.5 559.5,218.5 560.5,217.5 561.5,216.5 562.5,216.5 563.5,215.5 564.5,215.5 565.5,216.5 566.5,217.5 567.5,218.5 568.5,218.5 569.5,218.5 570.5,217.5 571.5,216.5 572.5,215.5 573.5,214.5 574.5,213.5 575.5,213.5 576.5,213.5 577.5,214.5 578.5,216.5 579.5,216.5 580.5,216.5 581.5,217.5 582.5,217.5 583.5,217.5 584.5,217.5 585.5,216.5 586.5,216.5 587.5,216.5 588.5,216.5 589.5,216.5 590.5,216.5 591.5,216.5 592.5,216.5 593.5,216.5 594.5,215.5 595.5,214.5 596.5,213.5 597.5,213.5 598.5,213.5 599.5,214.5 600.5,214.5 601.5,214.5 602.5,215.5 603.5,215.5 604.5,215.5 605.5,216.5 606.5,216.5 607.5,216.5 608.5,216.5 609.5,216.5 610.5,216.5 611.5,216.5 612.5,216.5 613.5,216.5 614.5,216.5 615.5,215.5 616.5,214.5 617.5,213.5 618.5,213.5 619.5,214.5 620.5,215.5 621.5,216.5 622.5,216.5 623.5,216.5 624.5,216.5 625.5,216.5 626.5,216.5 627.5,216.5 628.5,217.5 629.5,217.5 630.5,217.5 631.5,216.5 632.5,216.5 633.5,215.5 634.5,215.5 635.5,215.5 636.5,216.5 637.5,216.5 638.5,216.5 639.5,217.5 640.5,218.5 641.5,218.5 642.5,217.5 643.5,216.5 644.5,214.5 645.5,213.5 646.5,213.5 647.5,213.5 648.5,214.5 649.5,216.5 650.5,216.5 651.5,216.5 652.5,217.5 653.5,218.5 654.5,218.5 655.5,217.5 656.5,216.5 657.5,216.5 658.5,215.5 659.5,215.5 660.5,215.5 661.5,216.5 662.5,217.5 663.5,217.5 664.5,218.5 665.5,218.5 666.5,219.5 667.5,219.5 668.5,218.5 669.5,216.5 670.5,216.5 671.5,216.5 672.5,215.5 673.5,215.5 674.5,216.5 675.5,217.5 676.5,217.5 677.5,218.5 678.5,218.5 679.5,219.5 680.5,219.5 681.5,218.5 682.5,216.5 683.5,216.5 684.5,216.5 685.5,216.5 686.5,216.5 687.5,217.5 688.5,218.5 689.5,218.5 690.5,218.5 691.5,218.5 692.5,218.5 693.5,218.5 694.5,218.5 695.5,218.5 696.5,218.5 697.5,218.5 698.5,217.5 699.5,216.5 700.5,216.5 701.5,216.5 702.5,216.5 703.5,216.5 704.5,216.5 705.5,216.5 706.5,217.5 707.5,218.5 708.5,218.5 709.5,217.5 710.5,216.5 711.5,216.5 712.5,216.5 713.5,215.5 714.5,214.5 715.5,214.5 716.5,215.5 717.5,216.5 718.5,217.5 719.5,218.5 720.5,218.5 721.5,217.5 722.5,216.5 723.5,215.5 724.5,214.5 725.5,213.5 726.5,214.5 727.5,214.5 728.5,215.5 729.5,215.5 730.5,216.5 731.5,217.5 732.5,217.5 733.5,216.5 734.5,216.5 735.5,216.5 736.5,214.5 737.5,214.5 738.5,214.5 739.5,214.5 740.5,216.5 741.5,216.5 742.5,216.5 743.5,216.5 744.5,216.5 745.5,216.5 746.5,216.5 747.5,216.5 748.5,216.5 749.5,215.5 750.5,214.5 751.5,214.5 752.5,215.5 753.5,216.5 754.5,216.5 755.5,216.5 756.5,215.5 757.5,215.5 758.5,214.5 759.5,213.5 760.5,213.5 761.5,213.5 762.5,214.5 763.5,216.5 764.5,216.5 765.5,216.5 766.5,216.5 767.5,216.5 768.5,216.5 769.5,216.5 770.5,216.5 771.5,216.5 772.5,216.5 773.5,215.5 774.5,214.5 775.5,213.5 776.5,213.5 777.5,214.5 778.5,215.5 779.5,216.5 780.5,216.5" fill="none" stroke="#000" stroke-width="1" clip-path="url(#cn)"/><polyline points="0.5,216.5 1.5,216.5 2.5,217.5 3.5,218.5 4.5,220.5 5.5,220.5 6.5,217.5 7.5,216.5 8.5,216.5 9.5,216.5 10.5,216.5 11.5,216.5 12.5,216.5 13.5,216.5 14.5,217.5 15.5,218.5 16.5,218.5 17.5,217.5 18.5,216.5 19.5,216.5 20.5,216.5 21.5,216.5 22.5,216.5 23.5,216.5 24.5,216.5 25.5,216.5 26.5,216.5 27.5,216.5 28.5,216.5 29.5,217.5 30.5,218.5 31.5,218.5 32.5,217.5 33.5,216.5 34.5,216.5 35.5,216.5 36.5,216.5 37.5,216.5 38.5,216.5 39.5,216.5 40.5,216.5 41.5,216.5 42.5,216.5 43.5,217.5 44.5,217.5 45.5,217.5 46.5,217.5 47.5,217.5 48.5,217.5 49.5,217.5 50.5,216.5 51.5,216.5 52.5,216.5 53.5,216.5 54.5,216.5 55.5,217.5 56.5,217.5 57.5,217.5 58.5,217.5 59.5,218.5 60.5,218.5 61.5,218.5 62.5,218.5 63.5,217.5 64.5,216.5 65.5,215.5 66.5,214.5 67.5,214.5 68.5,213.5 69.5,213.5 70.5,214.5 71.5,215.5 72.5,216.5 73.5,217.5 74.5,218.5 75.5,218.5 76.5,218.5 77.5,217.5 78.5,216.5 79.5,216.5 80.5,215.5 81.5,214.5 82.5,214.5 83.5,215.5 84.5,216.5 85.5,217.5 86.5,218.5 87.5,218.5 88.5,217.5 89.5,216.5 90.5,216.5 91.5,215.5 92.5,214.5 93.5,214.5 94.5,214.5 95.5,215.5 96.5,217.5 97.5,217.5 98.5,217.5 99.5,218.5 100.5,218.5 101.5,217.5 102.5,216.5 103.5,216.5 104.5,215.5 105.5,214.5 106.5,215.5 107.5,216.5 108.5,216.5 109.5,216.5 110.5,217.5 111.5,218.5 112.5,218.5 113.5,217.5 114.5,216.5 115.5,215.5 116.5,213.5 117.5,213.5 118.5,212.5 119.5,211.5 120.5,212.5 121.5,213.5 122.5,214.5 123.5,215.5 124.5,215.5 125.5,216.5 126.5,216.5 127.5,216.5 128.5,215.5 129.5,214.5 130.5,214.5 131.5,213.5 132.5,213.5 133.5,213.5 134.5,214.5 135.5,215.5 136.5,215.5 137.5,216.5 138.5,217.5 139.5,216.5 140.5,215.5 141.5,214.5 142.5,214.5 143.5,213.5 144.5,212.5 145.5,212.5 146.5,213.5 147.5,214.5 148.5,215.5 149.5,215.5 150.5,216.5 151.5,217.5 152.5,218.5 153.5,218.5 154.5,217.5 155.5,216.5 156.5,216.5 157.5,215.5 158.5,214.5 159.5,215.5 160.5,216.5 161.5,217.5 162.5,219.5 163.5,219.5 164.5,219.5 165.5,217.5 166.5,216.5 167.5,214.5 168.5,213.5 169.5,213.5 170.5,214.5 171.5,215.5 172.5,216.5 173.5,216.5 174.5,216.5 175.5,217.5 176.5,217.5 177.5,217.5 178.5,216.5 179.5,216.5 180.5,216.5 181.5,216.5 182.5,216.5 183.5,216.5 184.5,215.5 185.5,215.5 186.5,215.5 187.5,215.5 188.5,214.5 189.5,213.5 190.5,212.5 191.5,212.5 192.5,212.5 193.5,212.5 194.5,213.5 195.5,214.5 196.5,215.5 197.5,215.5 198.5,216.5 199.5,216.5 200.5,216.5 201.5,216.5 202.5,216.5 203.5,216.5 204.5,216.5 205.5,216.5 206.5,216.5 207.5,216.5 208.5,216.5 209.5,215.5 210.5,214.5 211.5,213.5 212.5,214.5 213.5,215.5 214.5,216.5 215.5,216.5 216.5,216.5 217.5,216.5 218.5,217.5 219.5,217.5 220.5,217.5 221.5,217.5 222.5,217.5 223.5,216.5 224.5,216.5 225.5,216.5 226.5,216.5 227.5,215.5 228.5,214.5 229.5,215.5 230.5,216.5 231.5,216.5 232.5,216.5 233.5,217.5 234.5,218.5 235.5,217.5 236.5,216.5 237.5,215.5 238.5,214.5 239.5,214.5 240.5,213.5 241.5,214.5 242.5,214.5 243.5,215.5 244.5,216.5 245.5,217.5 246.5,218.5 247.5,218.5 248.5,217.5 249.5,216.5 250.5,216.5 251.5,215.5 252.5,215.5 253.5,215.5 254.5,215.5 255.5,216.5 256.5,216.5 257.5,216.5 258.5,217.5 259.5,218.5 260.5,219.5 261.5,219.5 262.5,219.5 263.5,218.5 264.5,216.5 265.5,216.5 266.5,215.5 267.5,215.5 268.5,216.5 269.5,217.5 270.5,217.5 271.5,217.5 272.5,218.5 273.5,218.5 274.5,218.5 275.5,217.5 276.5,215.5 277.5,214.5 278.5,214.5 279.5,213.5 280.5,212.5 281.5,212.5 282.5,213.5 283.5,214.5 284.5,214.5 285.5,215.5 286.5,216.5 287.5,218.5 288.5,218.5 289.5,218.5 290.5,216.5 291.5,216.5 292.5,215.5 293.5,214.5 294.5,214.5 295.5,214.5 296.5,216.5 297.5,216.5 298.5,217.5 299.5,218.5 300.5,219.5 301.5,219.5 302.5,217.5 303.5,216.5 304.5,215.5 305.5,214.5 306.5,215.5 307.5,215.5 308.5,216.5 309.5,216.5 310.5,216.5 311.5,216.5 312.5,216.5 313.5,216.5 314.5,217.5 315.5,217.5 316.5,217.5 317.5,217.5 318.5,217.5 319.5,217.5 320.5,216.5 321.5,215.5 322.5,214.5 323.5,213.5 324.5,213.5 325.5,214.5 326.5,215.5 327.5,216.5 328.5,216.5 329.5,216.5 330.5,216.5 331.5,216.5 332.5,215.5 333.5,214.5 334.5,214.5 335.5,214.5 336.5,215.5 337.5,216.5 338.5,216.5 339.5,216.5 340.5,216.5 341.5,216.5 342.5,216.5 343.5,216.5 344.5,215.5 345.5,214.5 346.5,213.5 347.5,213.5 348.5,213.5 349.5,214.5 350.5,215.5 351.5,215.5 352.5,215.5 353.5,215.5 354.5,216.5 355.5,216.5 356.5,216.5 357.5,216.5 358.5,216.5 359.5,216.5 360.5,216.5 361.5,216.5 362.5,216.5 363.5,216.5 364.5,216.5 365.5,216.5 366.5,216.5 367.5,216.5 368.5,216.5 369.5,215.5 370.5,215.5 371.5,215.5 372.5,215.5 373.5,215.5 374.5,215.5 375.5,215.5 376.5,215.5 377.5,215.5 378.5,215.5 379.5,215.5 380.5,215.5 381.5,216.5 382.5,216.5 383.5,216.5 384.5,216.5 385.5,216.5 386.5,216.5 387.5,215.5 388.5,215.5 389.5,214.5 390.5,214.5 391.5,214.5 392.5,215.5 393.5,216.5 394.5,216.5 395.5,216.5 396.5,216.5 397.5,216.5 398.5,216.5 399.5,216.5 400.5,216.5 401.5,216.5 402.5,216.5 403.5,216.5 404.5,216.5 405.5,216.5 406.5,216.5 407.5,216.5 408.5,216.5 409.5,215.5 410.5,214.5 411.5,213.5 412.5,213.5 413.5,214.5 414.5,215.5 415.5,216.5 416.5,216.5 417.5,216.5 418.5,216.5 419.5,216.5 420.5,216.5 421.5,216.5 422.5,216.5 423.5,216.5 424.5,216.5 425.5,216.5 426.5,216.5 427.5,216.5 428.5,216.5 429.5,216.5 430.5,216.5 431.5,216.5 432.5,216.5 433.5,216.5 434.5,215.5 435.5,215.5 436.5,215.5 437.5,216.5 438.5,217.5 439.5,217.5 440.5,217.5 441.5,216.5 442.5,215.5 443.5,215.5 444.5,215.5 445.5,215.5 446.5,215.5 447.5,216.5 448.5,216.5 449.5,216.5 450.5,216.5 451.5,216.5 452.5,216.5 453.5,215.5 454.5,214.5 455.5,214.5 456.5,214.5 457.5,215.5 458.5,216.5 459.5,216.5 460.5,216.5 461.5,216.5 462.5,216.5 463.5,216.5 464.5,216.5 465.5,216.5 466.5,215.5 467.5,213.5 468.5,213.5 469.5,213.5 470.5,214.5 471.5,216.5 472.5,216.5 473.5,216.5 474.5,216.5 475.5,216.5 476.5,216.5 477.5,216.5 478.5,215.5 479.5,214.5 480.5,214.5 481.5,215.5 482.5,216.5 483.5,216.5 484.5,216.5 485.5,216.5 486.5,216.5 487.5,215.5 488.5,213.5 489.5,213.5 490.5,213.5 491.5,214.5 492.5,216.5 493.5,216.5 494.5,216.5 495.5,216.5 496.5,216.5 497.5,215.5 498.5,214.5 499.5,213.5 500.5,213.5 501.5,213.5 502.5,213.5 503.5,213.5 504.5,214.5 505.5,214.5 506.5,215.5 507.5,215.5 508.5,215.5 509.5,215.5 510.5,215.5 511.5,214.5 512.5,213.5 513.5,213.5 514.5,213.5 515.5,214.5 516.5,215.5 517.5,215.5 518.5,215.5 519.5,216.5 520.5,216.5 521.5,216.5 522.5,214.5 523.5,213.5 524.5,211.5 525.5,211.5 526.5,211.5 527.5,213.5 528.5,214.5 529.5,216.5 530.5,216.5 531.5,216.5 532.5,216.5 533.5,216.5 534.5,216.5 535.5,216.5 536.5,215.5 537.5,213.5 538.5,213.5 539.5,213.5 540.5,214.5 541.5,216.5 542.5,216.5 543.5,216.5 544.5,217.5 545.5,217.5 546.5,216.5 547.5,214.5 548.5,214.5 549.5,214.5 550.5,212.5 551.5,212.5 552.5,213.5 553.5,214.5 554.5,215.5 555.5,216.5 556.5,216.5 557.5,217.5 558.5,218.5 559.5,218.5 560.5,217.5 561.5,216.5 562.5,216.5 563.5,215.5 564.5,215.5 565.5,216.5 566.5,217.5 567.5,218.5 568.5,218.5 569.5,218.5 570.5,217.5 571.5,216.5 572.5,215.5 573.5,214.5 574.5,213.5 575.5,213.5 576.5,213.5 577.5,214.5 578.5,216.5 579.5,216.5 580.5,216.5 581.5,217.5 582.5,217.5 583.5,217.5 584.5,217.5 585.5,216.5 586.5,216.5 587.5,216.5 588.5,216.5 589.5,216.5 590.5,216.5 591.5,216.5 592.5,216.5 593.5,216.5 594.5,215.5 595.5,214.5 596.5,213.5 597.5,213.5 598.5,213.5 599.5,214.5 600.5,214.5 601.5,214.5 602.5,215.5 603.5,215.5 604.5,215.5 605.5,216.5 606.5,216.5 607.5,216.5 608.5,216.5 609.5,216.5 610.5,216.5 611.5,216.5 612.5,216.5 613.5,216.5 614.5,216.5 615.5,215.5 616.5,214.5 617.5,213.5 618.5,213.5 619.5,214.5 620.5,215.5 621.5,216.5 622.5,216.5 623.5,216.5 624.5,216.5 625.5,216.5 626.5,216.5 627.5,216.5 628.5,217.5 629.5,217.5 630.5,217.5 631.5,216.5 632.5,216.5 633.5,215.5 634.5,215.5 635.5,215.5 636.5,216.5 637.5,216.5 638.5,216.5 639.5,217.5 640.5,218.5 641.5,218.5 642.5,217.5 643.5,216.5 644.5,214.5 645.5,213.5 646.5,213.5 647.5,213.5 648.5,214.5 649.5,216.5 650.5,216.5 651.5,216.5 652.5,217.5 653.5,218.5 654.5,218.5 655.5,217.5 656.5,216.5 657.5,216.5 658.5,215.5 659.5,215.5 660.5,215.5 661.5,216.5 662.5,217.5 663.5,217.5 664.5,218.5 665.5,218.5 666.5,219.5 667.5,219.5 668.5,218.5 669.5,216.5 670.5,216.5 671.5,216.5 672.5,215.5 673.5,215.5 674.5,216.5 675.5,217.5 676.5,217.5 677.5,218.5 678.5,218.5 679.5,219.5 680.5,219.5 681.5,218.5 682.5,216.5 683.5,216.5 684.5,216.5 685.5,216.5 686.5,216.5 687.5,217.5 688.5,218.5 689.5,218.5 690.5,218.5 691.5,218.5 692.5,218.5 693.5,218.5 694.5,218.5 695.5,218.5 696.5,218.5 697.5,218.5 698.5,217.5 699.5,216.5 700.5,216.5 701.5,216.5 702.5,216.5 703.5,216.5 704.5,216.5 705.5,216.5 706.5,217.5 707.5,218.5 708.5,218.5 709.5,217.5 710.5,216.5 711.5,216.5 712.5,216.5 713.5,215.5 714.5,214.5 715.5,214.5 716.5,215.5 717.5,216.5 718.5,217.5 719.5,218.5 720.5,218.5 721.5,217.5 722.5,216.5 723.5,215.5 724.5,214.5 725.5,213.5 726.5,214.5 727.5,214.5 728.5,215.5 729.5,215.5 730.5,216.5 731.5,217.5 732.5,217.5 733.5,216.5 734.5,216.5 735.5,216.5 736.5,214.5 737.5,214.5 738.5,214.5 739.5,214.5 740.5,216.5 741.5,216.5 742.5,216.5 743.5,216.5 744.5,216.5 745.5,216.5 746.5,216.5 747.5,216.5 748.5,216.5 749.5,215.5 750.5,214.5 751.5,214.5 752.5,215.5 753.5,216.5 754.5,216.5 755.5,216.5 756.5,215.5 757.5,215.5 758.5,214.5 759.5,213.5 760.5,213.5 761.5,213.5 762.5,214.5 763.5,216.5 764.5,216.5 765.5,216.5 766.5,216.5 767.5,216.5 768.5,216.5 769.5,216.5 770.5,216.5 771.5,216.5 772.5,216.5 773.5,215.5 774.5,214.5 775.5,213.5 776.5,213.5 777.5,214.5 778.5,215.5 779.5,216.5 780.5,216.5" fill="none" stroke="#fff" stroke-width="1" clip-path="url(#cb)"/><polyline points="0.5,216.5 1.5,216.5 2.5,217.5 3.5,218.5 4.5,220.5 5.5,220.5 6.5,217.5 7.5,216.5 8.5,216.5 9.5,216.5 10.5,216.5 11.5,216.5 12.5,216.5 13.5,216.5 14.5,217.5 15.5,218.5 16.5,218.5 17.5,217.5 18.5,216.5 19.5,216.5 20.5,216.5 21.5,216.5 22.5,216.5 23.5,216.5 24.5,216.5 25.5,216.5 26.5,216.5 27.5,216.5 28.5,216.5 29.5,217.5 30.5,218.5 31.5,218.5 32.5,217.5 33.5,216.5 34.5,216.5 35.5,216.5 36.5,216.5 37.5,216.5 38.5,216.5 39.5,216.5 40.5,216.5 41.5,216.5 42.5,216.5 43.5,217.5 44.5,217.5 45.5,217.5 46.5,217.5 47.5,217.5 48.5,217.5 49.5,217.5 50.5,216.5 51.5,216.5 52.5,216.5 53.5,216.5 54.5,216.5 55.5,217.5 56.5,217.5 57.5,217.5 58.5,217.5 59.5,218.5 60.5,218.5 61.5,218.5 62.5,218.5 63.5,217.5 64.5,216.5 65.5,215.5 66.5,214.5 67.5,214.5 68.5,213.5 69.5,213.5 70.5,214.5 71.5,215.5 72.5,216.5 73.5,217.5 74.5,218.5 75.5,218.5 76.5,218.5 77.5,217.5 78.5,216.5 79.5,216.5 80.5,215.5 81.5,214.5 82.5,214.5 83.5,215.5 84.5,216.5 85.5,217.5 86.5,218.5 87.5,218.5 88.5,217.5 89.5,216.5 90.5,216.5 91.5,215.5 92.5,214.5 93.5,214.5 94.5,214.5 95.5,215.5 96.5,217.5 97.5,217.5 98.5,217.5 99.5,218.5 100.5,218.5 101.5,217.5 102.5,216.5 103.5,216.5 104.5,215.5 105.5,214.5 106.5,215.5 107.5,216.5 108.5,216.5 109.5,216.5 110.5,217.5 111.5,218.5 112.5,218.5 113.5,217.5 114.5,216.5 115.5,215.5 116.5,213.5 117.5,213.5 118.5,212.5 119.5,211.5 120.5,212.5 121.5,213.5 122.5,214.5 123.5,215.5 124.5,215.5 125.5,216.5 126.5,216.5 127.5,216.5 128.5,215.5 129.5,214.5 130.5,214.5 131.5,213.5 132.5,213.5 133.5,213.5 134.5,214.5 135.5,215.5 136.5,215.5 137.5,216.5 138.5,217.5 139.5,216.5 140.5,215.5 141.5,214.5 142.5,214.5 143.5,213.5 144.5,212.5 145.5,212.5 146.5,213.5 147.5,214.5 148.5,215.5 149.5,215.5 150.5,216.5 151.5,217.5 152.5,218.5 153.5,218.5 154.5,217.5 155.5,216.5 156.5,216.5 157.5,215.5 158.5,214.5 159.5,215.5 160.5,216.5 161.5,217.5 162.5,219.5 163.5,219.5 164.5,219.5 165.5,217.5 166.5,216.5 167.5,214.5 168.5,213.5 169.5,213.5 170.5,214.5 171.5,215.5 172.5,216.5 173.5,216.5 174.5,216.5 175.5,217.5 176.5,217.5 177.5,217.5 178.5,216.5 179.5,216.5 180.5,216.5 181.5,216.5 182.5,216.5 183.5,216.5 184.5,215.5 185.5,215.5 186.5,215.5 187.5,215.5 188.5,214.5 189.5,213.5 190.5,212.5 191.5,212.5 192.5,212.5 193.5,212.5 194.5,213.5 195.5,214.5 196.5,215.5 197.5,215.5 198.5,216.5 199.5,216.5 200.5,216.5 201.5,216.5 202.5,216.5 203.5,216.5 204.5,216.5 205.5,216.5 206.5,216.5 207.5,216.5 208.5,216.5 209.5,215.5 210.5,214.5 211.5,213.5 212.5,214.5 213.5,215.5 214.5,216.5 215.5,216.5 216.5,216.5 217.5,216.5 218.5,217.5 219.5,217.5 220.5,217.5 221.5,217.5 222.5,217.5 223.5,216.5 224.5,216.5 225.5,216.5 226.5,216.5 227.5,215.5 228.5,214.5 229.5,215.5 230.5,216.5 231.5,216.5 232.5,216.5 233.5,217.5 234.5,218.5 235.5,217.5 236.5,216.5 237.5,215.5 238.5,214.5 239.5,214.5 240.5,213.5 241.5,214.5 242.5,214.5 243.5,215.5 244.5,216.5 245.5,217.5 246.5,218.5 247.5,218.5 248.5,217.5 249.5,216.5 250.5,216.5 251.5,215.5 252.5,215.5 253.5,215.5 254.5,215.5 255.5,216.5 256.5,216.5 257.5,216.5 258.5,217.5 259.5,218.5 260.5,219.5 261.5,219.5 262.5,219.5 263.5,218.5 264.5,216.5 265.5,216.5 266.5,215.5 267.5,215.5 268.5,216.5 269.5,217.5 270.5,217.5 271.5,217.5 272.5,218.5 273.5,218.5 274.5,218.5 275.5,217.5 276.5,215.5 277.5,214.5 278.5,214.5 279.5,213.5 280.5,212.5 281.5,212.5 282.5,213.5 283.5,214.5 284.5,214.5 285.5,215.5 286.5,216.5 287.5,218.5 288.5,218.5 289.5,218.5 290.5,216.5 291.5,216.5 292.5,215.5 293.5,214.5 294.5,214.5 295.5,214.5 296.5,216.5 297.5,216.5 298.5,217.5 299.5,218.5 300.5,219.5 301.5,219.5 302.5,217.5 303.5,216.5 304.5,215.5 305.5,214.5 306.5,215.5 307.5,215.5 308.5,216.5 309.5,216.5 310.5,216.5 311.5,216.5 312.5,216.5 313.5,216.5 314.5,217.5 315.5,217.5 316.5,217.5 317.5,217.5 318.5,217.5 319.5,217.5 320.5,216.5 321.5,215.5 322.5,214.5 323.5,213.5 324.5,213.5 325.5,214.5 326.5,215.5 327.5,216.5 328.5,216.5 329.5,216.5 330.5,216.5 331.5,216.5 332.5,215.5 333.5,214.5 334.5,214.5 335.5,214.5 336.5,215.5 337.5,216.5 338.5,216.5 339.5,216.5 340.5,216.5 341.5,216.5 342.5,216.5 343.5,216.5 344.5,215.5 345.5,214.5 346.5,213.5 347.5,213.5 348.5,213.5 349.5,214.5 350.5,215.5 351.5,215.5 352.5,215.5 353.5,215.5 354.5,216.5 355.5,216.5 356.5,216.5 357.5,216.5 358.5,216.5 359.5,216.5 360.5,216.5 361.5,216.5 362.5,216.5 363.5,216.5 364.5,216.5 365.5,216.5 366.5,216.5 367.5,216.5 368.5,216.5 369.5,215.5 370.5,215.5 371.5,215.5 372.5,215.5 373.5,215.5 374.5,215.5 375.5,215.5 376.5,215.5 377.5,215.5 378.5,215.5 379.5,215.5 380.5,215.5 381.5,216.5 382.5,216.5 383.5,216.5 384.5,216.5 385.5,216.5 386.5,216.5 387.5,215.5 388.5,215.5 389.5,214.5 390.5,214.5 391.5,214.5 392.5,215.5 393.5,216.5 394.5,216.5 395.5,216.5 396.5,216.5 397.5,216.5 398.5,216.5 399.5,216.5 400.5,216.5 401.5,216.5 402.5,216.5 403.5,216.5 404.5,216.5 405.5,216.5 406.5,216.5 407.5,216.5 408.5,216.5 409.5,215.5 410.5,214.5 411.5,213.5 412.5,213.5 413.5,214.5 414.5,215.5 415.5,216.5 416.5,216.5 417.5,216.5 418.5,216.5 419.5,216.5 420.5,216.5 421.5,216.5 422.5,216.5 423.5,216.5 424.5,216.5 425.5,216.5 426.5,216.5 427.5,216.5 428.5,216.5 429.5,216.5 430.5,216.5 431.5,216.5 432.5,216.5 433.5,216.5 434.5,215.5 435.5,215.5 436.5,215.5 437.5,216.5 438.5,217.5 439.5,217.5 440.5,217.5 441.5,216.5 442.5,215.5 443.5,215.5 444.5,215.5 445.5,215.5 446.5,215.5 447.5,216.5 448.5,216.5 449.5,216.5 450.5,216.5 451.5,216.5 452.5,216.5 453.5,215.5 454.5,214.5 455.5,214.5 456.5,214.5 457.5,215.5 458.5,216.5 459.5,216.5 460.5,216.5 461.5,216.5 462.5,216.5 463.5,216.5 464.5,216.5 465.5,216.5 466.5,215.5 467.5,213.5 468.5,213.5 469.5,213.5 470.5,214.5 471.5,216.5 472.5,216.5 473.5,216.5 474.5,216.5 475.5,216.5 476.5,216.5 477.5,216.5 478.5,215.5 479.5,214.5 480.5,214.5 481.5,215.5 482.5,216.5 483.5,216.5 484.5,216.5 485.5,216.5 486.5,216.5 487.5,215.5 488.5,213.5 489.5,213.5 490.5,213.5 491.5,214.5 492.5,216.5 493.5,216.5 494.5,216.5 495.5,216.5 496.5,216.5 497.5,215.5 498.5,214.5 499.5,213.5 500.5,213.5 501.5,213.5 502.5,213.5 503.5,213.5 504.5,214.5 505.5,214.5 506.5,215.5 507.5,215.5 508.5,215.5 509.5,215.5 510.5,215.5 511.5,214.5 512.5,213.5 513.5,213.5 514.5,213.5 515.5,214.5 516.5,215.5 517.5,215.5 518.5,215.5 519.5,216.5 520.5,216.5 521.5,216.5 522.5,214.5 523.5,213.5 524.5,211.5 525.5,211.5 526.5,211.5 527.5,213.5 528.5,214.5 529.5,216.5 530.5,216.5 531.5,216.5 532.5,216.5 533.5,216.5 534.5,216.5 535.5,216.5 536.5,215.5 537.5,213.5 538.5,213.5 539.5,213.5 540.5,214.5 541.5,216.5 542.5,216.5 543.5,216.5 544.5,217.5 545.5,217.5 546.5,216.5 547.5,214.5 548.5,214.5 549.5,214.5 550.5,212.5 551.5,212.5 552.5,213.5 553.5,214.5 554.5,215.5 555.5,216.5 556.5,216.5 557.5,217.5 558.5,218.5 559.5,218.5 560.5,217.5 561.5,216.5 562.5,216.5 563.5,215.5 564.5,215.5 565.5,216.5 566.5,217.5 567.5,218.5 568.5,218.5 569.5,218.5 570.5,217.5 571.5,216.5 572.5,215.5 573.5,214.5 574.5,213.5 575.5,213.5 576.5,213.5 577.5,214.5 578.5,216.5 579.5,216.5 580.5,216.5 581.5,217.5 582.5,217.5 583.5,217.5 584.5,217.5 585.5,216.5 586.5,216.5 587.5,216.5 588.5,216.5 589.5,216.5 590.5,216.5 591.5,216.5 592.5,216.5 593.5,216.5 594.5,215.5 595.5,214.5 596.5,213.5 597.5,213.5 598.5,213.5 599.5,214.5 600.5,214.5 601.5,214.5 602.5,215.5 603.5,215.5 604.5,215.5 605.5,216.5 606.5,216.5 607.5,216.5 608.5,216.5 609.5,216.5 610.5,216.5 611.5,216.5 612.5,216.5 613.5,216.5 614.5,216.5 615.5,215.5 616.5,214.5 617.5,213.5 618.5,213.5 619.5,214.5 620.5,215.5 621.5,216.5 622.5,216.5 623.5,216.5 624.5,216.5 625.5,216.5 626.5,216.5 627.5,216.5 628.5,217.5 629.5,217.5 630.5,217.5 631.5,216.5 632.5,216.5 633.5,215.5 634.5,215.5 635.5,215.5 636.5,216.5 637.5,216.5 638.5,216.5 639.5,217.5 640.5,218.5 641.5,218.5 642.5,217.5 643.5,216.5 644.5,214.5 645.5,213.5 646.5,213.5 647.5,213.5 648.5,214.5 649.5,216.5 650.5,216.5 651.5,216.5 652.5,217.5 653.5,218.5 654.5,218.5 655.5,217.5 656.5,216.5 657.5,216.5 658.5,215.5 659.5,215.5 660.5,215.5 661.5,216.5 662.5,217.5 663.5,217.5 664.5,218.5 665.5,218.5 666.5,219.5 667.5,219.5 668.5,218.5 669.5,216.5 670.5,216.5 671.5,216.5 672.5,215.5 673.5,215.5 674.5,216.5 675.5,217.5 676.5,217.5 677.5,218.5 678.5,218.5 679.5,219.5 680.5,219.5 681.5,218.5 682.5,216.5 683.5,216.5 684.5,216.5 685.5,216.5 686.5,216.5 687.5,217.5 688.5,218.5 689.5,218.5 690.5,218.5 691.5,218.5 692.5,218.5 693.5,218.5 694.5,218.5 695.5,218.5 696.5,218.5 697.5,218.5 698.5,217.5 699.5,216.5 700.5,216.5 701.5,216.5 702.5,216.5 703.5,216.5 704.5,216.5 705.5,216.5 706.5,217.5 707.5,218.5 708.5,218.5 709.5,217.5 710.5,216.5 711.5,216.5 712.5,216.5 713.5,215.5 714.5,214.5 715.5,214.5 716.5,215.5 717.5,216.5 718.5,217.5 719.5,218.5 720.5,218.5 721.5,217.5 722.5,216.5 723.5,215.5 724.5,214.5 725.5,213.5 726.5,214.5 727.5,214.5 728.5,215.5 729.5,215.5 730.5,216.5 731.5,217.5 732.5,217.5 733.5,216.5 734.5,216.5 735.5,216.5 736.5,214.5 737.5,214.5 738.5,214.5 739.5,214.5 740.5,216.5 741.5,216.5 742.5,216.5 743.5,216.5 744.5,216.5 745.5,216.5 746.5,216.5 747.5,216.5 748.5,216.5 749.5,215.5 750.5,214.5 751.5,214.5 752.5,215.5 753.5,216.5 754.5,216.5 755.5,216.5 756.5,215.5 757.5,215.5 758.5,214.5 759.5,213.5 760.5,213.5 761.5,213.5 762.5,214.5 763.5,216.5 764.5,216.5 765.5,216.5 766.5,216.5 767.5,216.5 768.5,216.5 769.5,216.5 770.5,216.5 771.5,216.5 772.5,216.5 773.5,215.5 774.5,214.5 775.5,213.5 776.5,213.5 777.5,214.5 778.5,215.5 779.5,216.5 780.5,216.5" fill="none" stroke="#0000ff" stroke-width="1" clip-path="url(#cm)"/><rect x="0" y="428" width="780" height="1" fill="#000"/><rect x="114" y="428" width="162" height="1" fill="#fff"/><polyline points="0.5,426.5 1.5,426.5 2.5,427.5 3.5,428.5 4.5,428.5 5.5,428.5 6.5,428.5 7.5,428.5 8.5,428.5 9.5,428.5 10.5,427.5 11.5,427.5 12.5,426.5 13.5,426.5 14.5,426.5 15.5,427.5 16.5,428.5 17.5,428.5 18.5,428.5 19.5,428.5 20.5,428.5 21.5,428.5 22.5,428.5 23.5,428.5 24.5,428.5 25.5,428.5 26.5,428.5 27.5,428.5 28.5,428.5 29.5,428.5 30.5,428.5 31.5,428.5 32.5,428.5 33.5,428.5 34.5,427.5 35.5,426.5 36.5,426.5 37.5,425.5 38.5,425.5 39.5,426.5 40.5,427.5 41.5,428.5 42.5,428.5 43.5,428.5 44.5,428.5 45.5,428.5 46.5,428.5 47.5,428.5 48.5,428.5 49.5,427.5 50.5,427.5 51.5,426.5 52.5,427.5 53.5,428.5 54.5,429.5 55.5,429.5 56.5,429.5 57.5,429.5 58.5,429.5 59.5,429.5 60.5,429.5 61.5,429.5 62.5,428.5 63.5,428.5 64.5,428.5 65.5,428.5 66.5,428.5 67.5,428.5 68.5,428.5 69.5,428.5 70.5,428.5 71.5,428.5 72.5,427.5 73.5,425.5 74.5,425.5 75.5,425.5 76.5,426.5 77.5,428.5 78.5,428.5 79.5,428.5 80.5,428.5 81.5,428.5 82.5,428.5 83.5,428.5 84.5,427.5 85.5,426.5 86.5,426.5 87.5,426.5 88.5,427.5 89.5,428.5 90.5,428.5 91.5,428.5 92.5,428.5 93.5,428.5 94.5,428.5 95.5,428.5 96.5,428.5 97.5,428.5 98.5,428.5 99.5,428.5 100.5,428.5 101.5,428.5 102.5,429.5 103.5,429.5 104.5,429.5 105.5,430.5 106.5,430.5 107.5,430.5 108.5,429.5 109.5,428.5 110.5,428.5 111.5,428.5 112.5,428.5 113.5,428.5 114.5,428.5 115.5,428.5 116.5,429.5 117.5,430.5 118.5,430.5 119.5,429.5 120.5,428.5 121.5,428.5 122.5,428.5 123.5,428.5 124.5,428.5 125.5,428.5 126.5,428.5 127.5,428.5 128.5,428.5 129.5,428.5 130.5,428.5 131.5,428.5 132.5,428.5 133.5,428.5 134.5,428.5 135.5,428.5 136.5,428.5 137.5,428.5 138.5,428.5 139.5,428.5 140.5,428.5 141.5,428.5 142.5,428.5 143.5,428.5 144.5,428.5 145.5,428.5 146.5,428.5 147.5,428.5 148.5,428.5 149.5,428.5 150.5,428.5 151.5,428.5 152.5,428.5 153.5,428.5 154.5,428.5 155.5,428.5 156.5,428.5 157.5,428.5 158.5,428.5 159.5,428.5 160.5,428.5 161.5,428.5 162.5,428.5 163.5,428.5 164.5,428.5 165.5,428.5 166.5,428.5 167.5,428.5 168.5,428.5 169.5,428.5 170.5,428.5 171.5,428.5 172.5,428.5 173.5,428.5 174.5,428.5 175.5,428.5 176.5,428.5 177.5,428.5 178.5,428.5 179.5,428.5 180.5,428.5 181.5,428.5 182.5,428.5 183.5,428.5 184.5,427.5 185.5,427.5 186.5,427.5 187.5,427.5 188.5,427.5 189.5,427.5 190.5,427.5 191.5,427.5 192.5,427.5 193.5,427.5 194.5,427.5 195.5,427.5 196.5,427.5 197.5,427.5 198.5,427.5 199.5,427.5 200.5,427.5 201.5,427.5 202.5,427.5 203.5,427.5 204.5,427.5 205.5,427.5 206.5,427.5 207.5,427.5 208.5,427.5 209.5,427.5 210.5,427.5 211.5,427.5 212.5,427.5 213.5,427.5 214.5,427.5 215.5,427.5 216.5,427.5 217.5,427.5 218.5,427.5 219.5,427.5 220.5,427.5 221.5,427.5 222.5,427.5 223.5,427.5 224.5,427.5 225.5,427.5 226.5,427.5 227.5,427.5 228.5,427.5 229.5,427.5 230.5,427.5 231.5,427.5 232.5,427.5 233.5,427.5 234.5,427.5 235.5,427.5 236.5,427.5 237.5,427.5 238.5,427.5 239.5,427.5 240.5,427.5 241.5,427.5 242.5,427.5 243.5,427.5 244.5,427.5 245.5,427.5 246.5,427.5 247.5,427.5 248.5,427.5 249.5,427.5 250.5,427.5 251.5,427.5 252.5,427.5 253.5,427.5 254.5,427.5 255.5,427.5 256.5,427.5 257.5,427.5 258.5,427.5 259.5,427.5 260.5,427.5 261.5,427.5 262.5,427.5 263.5,427.5 264.5,427.5 265.5,427.5 266.5,427.5 267.5,427.5 268.5,427.5 269.5,427.5 270.5,426.5 271.5,426.5 272.5,426.5 273.5,426.5 274.5,426.5 275.5,427.5 276.5,428.5 277.5,428.5 278.5,428.5 279.5,428.5 280.5,428.5 281.5,428.5 282.5,428.5 283.5,428.5 284.5,427.5 285.5,426.5 286.5,425.5 287.5,425.5 288.5,426.5 289.5,427.5 290.5,428.5 291.5,428.5 292.5,428.5 293.5,429.5 294.5,429.5 295.5,429.5 296.5,430.5 297.5,430.5 298.5,430.5 299.5,430.5 300.5,429.5 301.5,428.5 302.5,428.5 303.5,428.5 304.5,428.5 305.5,428.5 306.5,428.5 307.5,428.5 308.5,428.5 309.5,428.5 310.5,429.5 311.5,430.5 312.5,430.5 313.5,430.5 314.5,429.5 315.5,428.5 316.5,428.5 317.5,428.5 318.5,428.5 319.5,428.5 320.5,428.5 321.5,428.5 322.5,429.5 323.5,429.5 324.5,429.5 325.5,430.5 326.5,430.5 327.5,430.5 328.5,430.5 329.5,430.5 330.5,429.5 331.5,429.5 332.5,428.5 333.5,428.5 334.5,428.5 335.5,429.5 336.5,429.5 337.5,430.5 338.5,430.5 339.5,430.5 340.5,429.5 341.5,428.5 342.5,428.5 343.5,428.5 344.5,427.5 345.5,426.5 346.5,426.5 347.5,426.5 348.5,427.5 349.5,428.5 350.5,429.5 351.5,430.5 352.5,431.5 353.5,432.5 354.5,431.5 355.5,430.5 356.5,428.5 357.5,427.5 358.5,425.5 359.5,425.5 360.5,426.5 361.5,427.5 362.5,428.5 363.5,428.5 364.5,429.5 365.5,431.5 366.5,431.5 367.5,431.5 368.5,430.5 369.5,428.5 370.5,428.5 371.5,428.5 372.5,428.5 373.5,428.5 374.5,428.5 375.5,429.5 376.5,430.5 377.5,430.5 378.5,430.5 379.5,429.5 380.5,428.5 381.5,428.5 382.5,428.5 383.5,428.5 384.5,428.5 385.5,428.5 386.5,428.5 387.5,428.5 388.5,428.5 389.5,428.5 390.5,428.5 391.5,428.5 392.5,428.5 393.5,428.5 394.5,428.5 395.5,428.5 396.5,428.5 397.5,428.5 398.5,428.5 399.5,428.5 400.5,428.5 401.5,428.5 402.5,428.5 403.5,428.5 404.5,427.5 405.5,426.5 406.5,425.5 407.5,425.5 408.5,426.5 409.5,427.5 410.5,427.5 411.5,427.5 412.5,428.5 413.5,428.5 414.5,428.5 415.5,428.5 416.5,428.5 417.5,428.5 418.5,428.5 419.5,427.5 420.5,427.5 421.5,427.5 422.5,427.5 423.5,427.5 424.5,428.5 425.5,428.5 426.5,429.5 427.5,430.5 428.5,430.5 429.5,430.5 430.5,429.5 431.5,428.5 432.5,427.5 433.5,426.5 434.5,426.5 435.5,426.5 436.5,427.5 437.5,428.5 438.5,428.5 439.5,429.5 440.5,430.5 441.5,430.5 442.5,430.5 443.5,429.5 444.5,428.5 445.5,427.5 446.5,427.5 447.5,427.5 448.5,428.5 449.5,428.5 450.5,428.5 451.5,428.5 452.5,428.5 453.5,428.5 454.5,428.5 455.5,428.5 456.5,428.5 457.5,428.5 458.5,428.5 459.5,428.5 460.5,428.5 461.5,429.5 462.5,429.5 463.5,429.5 464.5,429.5 465.5,429.5 466.5,429.5 467.5,429.5 468.5,429.5 469.5,429.5 470.5,429.5 471.5,429.5 472.5,429.5 473.5,428.5 474.5,428.5 475.5,428.5 476.5,428.5 477.5,428.5 478.5,428.5 479.5,428.5 480.5,428.5 481.5,428.5 482.5,428.5 483.5,429.5 484.5,430.5 485.5,430.5 486.5,430.5 487.5,429.5 488.5,428.5 489.5,427.5 490.5,427.5 491.5,427.5 492.5,427.5 493.5,428.5 494.5,428.5 495.5,428.5 496.5,429.5 497.5,430.5 498.5,430.5 499.5,429.5 500.5,428.5 501.5,428.5 502.5,428.5 503.5,428.5 504.5,428.5 505.5,428.5 506.5,428.5 507.5,428.5 508.5,428.5 509.5,429.5 510.5,430.5 511.5,430.5 512.5,430.5 513.5,429.5 514.5,428.5 515.5,428.5 516.5,428.5 517.5,428.5 518.5,428.5 519.5,428.5 520.5,428.5 521.5,428.5 522.5,429.5 523.5,430.5 524.5,429.5 525.5,429.5 526.5,428.5 527.5,428.5 528.5,428.5 529.5,428.5 530.5,428.5 531.5,428.5 532.5,428.5 533.5,428.5 534.5,428.5 535.5,428.5 536.5,428.5 537.5,428.5 538.5,428.5 539.5,428.5 540.5,428.5 541.5,428.5 542.5,427.5 543.5,427.5 544.5,427.5 545.5,427.5 546.5,427.5 547.5,428.5 548.5,428.5 549.5,429.5 550.5,430.5 551.5,430.5 552.5,430.5 553.5,429.5 554.5,428.5 555.5,427.5 556.5,427.5 557.5,426.5 558.5,427.5 559.5,427.5 560.5,427.5 561.5,428.5 562.5,428.5 563.5,428.5 564.5,428.5 565.5,428.5 566.5,428.5 567.5,428.5 568.5,428.5 569.5,428.5 570.5,428.5 571.5,428.5 572.5,428.5 573.5,428.5 574.5,427.5 575.5,427.5 576.5,427.5 577.5,427.5 578.5,427.5 579.5,427.5 580.5,426.5 581.5,426.5 582.5,426.5 583.5,426.5 584.5,426.5 585.5,426.5 586.5,426.5 587.5,426.5 588.5,426.5 589.5,426.5 590.5,426.5 591.5,426.5 592.5,426.5 593.5,426.5 594.5,426.5 595.5,426.5 596.5,426.5 597.5,426.5 598.5,426.5 599.5,426.5 600.5,426.5 601.5,426.5 602.5,426.5 603.5,426.5 604.5,426.5 605.5,426.5 606.5,426.5 607.5,426.5 608.5,426.5 609.5,426.5 610.5,426.5 611.5,427.5 612.5,427.5 613.5,427.5 614.5,428.5 615.5,428.5 616.5,428.5 617.5,428.5 618.5,428.5 619.5,428.5 620.5,428.5 621.5,428.5 622.5,429.5 623.5,429.5 624.5,429.5 625.5,429.5 626.5,429.5 627.5,429.5 628.5,429.5 629.5,430.5 630.5,430.5 631.5,430.5 632.5,429.5 633.5,428.5 634.5,428.5 635.5,428.5 636.5,427.5 637.5,427.5 638.5,427.5 639.5,426.5 640.5,427.5 641.5,429.5 642.5,430.5 643.5,430.5 644.5,428.5 645.5,427.5 646.5,425.5 647.5,425.5 648.5,426.5 649.5,428.5 650.5,429.5 651.5,429.5 652.5,429.5 653.5,429.5 654.5,429.5 655.5,430.5 656.5,429.5 657.5,429.5 658.5,428.5 659.5,427.5 660.5,426.5 661.5,426.5 662.5,426.5 663.5,427.5 664.5,428.5 665.5,428.5 666.5,428.5 667.5,428.5 668.5,428.5 669.5,428.5 670.5,428.5 671.5,428.5 672.5,427.5 673.5,426.5 674.5,426.5 675.5,426.5 676.5,427.5 677.5,427.5 678.5,427.5 679.5,427.5 680.5,427.5 681.5,427.5 682.5,427.5 683.5,427.5 684.5,426.5 685.5,425.5 686.5,425.5 687.5,425.5 688.5,426.5 689.5,427.5 690.5,428.5 691.5,428.5 692.5,428.5 693.5,428.5 694.5,428.5 695.5,428.5 696.5,428.5 697.5,428.5 698.5,427.5 699.5,427.5 700.5,426.5 701.5,426.5 702.5,426.5 703.5,427.5 704.5,427.5 705.5,428.5 706.5,428.5 707.5,428.5 708.5,428.5 709.5,428.5 710.5,428.5 711.5,427.5 712.5,427.5 713.5,427.5 714.5,426.5 715.5,427.5 716.5,427.5 717.5,427.5 718.5,428.5 719.5,428.5 720.5,428.5 721.5,428.5 722.5,428.5 723.5,428.5 724.5,427.5 725.5,427.5 726.5,427.5 727.5,427.5 728.5,427.5 729.5,427.5 730.5,427.5 731.5,427.5 732.5,427.5 733.5,428.5 734.5,428.5 735.5,428.5 736.5,428.5 737.5,428.5 738.5,428.5 739.5,428.5 740.5,428.5 741.5,429.5 742.5,429.5 743.5,429.5 744.5,429.5 745.5,430.5 746.5,429.5 747.5,429.5 748.5,429.5 749.5,428.5 750.5,428.5 751.5,427.5 752.5,427.5 753.5,427.5 754.5,427.5 755.5,427.5 756.5,427.5 757.5,428.5 758.5,428.5 759.5,428.5 760.5,428.5 761.5,429.5 762.5,429.5 763.5,429.5 764.5,429.5 765.5,429.5 766.5,430.5 767.5,429.5 768.5,429.5 769.5,429.5 770.5,429.5 771.5,429.5 772.5,428.5 773.5,428.5 774.5,428.5 775.5,428.5 776.5,428.5 777.5,428.5 778.5,428.5 779.5,428.5 780.5,428.5" fill="none" stroke="#000" stroke-width="1" clip-path="url(#cn)"/><polyline points="127.5,428.5 128.5,428.8 129.5,429.2 130.5,429.5 131.5,430.5 132.5,431.5 133.5,429.0 134.5,426.5 135.5,427.5 136.5,428.5 137.5,426.5 138.8,423.5 139.9,416.0 141.0,408.5 141.9,424.2 142.8,462.0 143.6,499.8 144.5,515.5 145.6,505.3 146.6,477.5 147.7,439.5 148.8,401.5 149.8,373.7 150.9,363.5 152.0,371.9 153.0,393.8 154.1,420.8 155.1,442.7 156.2,451.1 157.2,447.6 158.3,438.0 159.3,424.8 160.4,411.7 161.4,402.0 162.5,398.5 163.5,403.3 164.4,415.8 165.4,431.2 166.3,443.7 167.3,448.5 168.3,446.3 169.4,440.3 170.4,431.6 171.4,421.8 172.4,413.1 173.5,407.1 174.5,404.9 175.5,409.9 176.5,423.1 177.5,439.3 178.5,452.5 179.5,457.5 180.5,454.9 181.4,447.6 182.4,437.8 183.3,427.9 184.3,420.6 185.2,418.0 186.3,421.0 187.3,429.0 188.4,438.9 189.4,446.9 190.5,449.9 191.6,445.8 192.6,435.1 193.7,421.8 194.7,411.1 195.8,407.0 196.7,408.6 197.7,413.2 198.7,420.0 199.6,428.0 200.6,436.0 201.6,442.8 202.5,447.4 203.5,449.0 204.5,446.0 205.5,438.8 206.5,431.5 207.5,428.5 208.5,427.8 209.5,425.9 210.4,423.7 211.4,421.8 212.4,421.1 213.4,422.3 214.4,425.1 215.5,427.8 216.5,429.0 217.6,429.0 218.8,429.0 219.9,429.0 220.9,428.0 222.0,425.9 223.0,424.9 224.0,425.9 225.1,428.0 226.1,429.0 227.2,429.0 228.3,429.0 229.4,429.0 230.5,429.0 231.8,427.4 233.0,425.9 233.9,426.0 234.8,426.2 235.6,426.4 236.5,426.5 237.5,426.7 238.5,427.4 239.5,428.3 240.5,429.3 241.5,430.2 242.5,430.9 243.5,431.1 244.5,430.9 245.5,430.4 246.5,429.7 247.5,429.2 248.5,429.0 249.5,429.1 250.4,429.2 251.4,429.5 252.3,429.8 253.3,429.9 254.2,430.0 255.2,429.8 256.1,429.2 257.1,428.7 258.0,428.5 259.0,428.6 260.0,429.0 261.0,429.5 262.0,429.9 263.0,430.0 264.0,429.8 265.0,429.1 266.0,428.4 267.0,427.7 268.0,427.5 268.9,427.4 269.8,427.2 270.8,427.0 271.7,426.8 272.6,426.6 273.5,426.5 274.5,426.7 275.4,427.1 276.4,427.8 277.3,428.4 278.3,428.8 279.2,429.0" fill="none" stroke="#fff" stroke-width="1" clip-path="url(#cb)"/><polyline points="0.5,426.5 1.5,426.5 2.5,427.5 3.5,428.5 4.5,428.5 5.5,428.5 6.5,428.5 7.5,428.5 8.5,428.5 9.5,428.5 10.5,427.5 11.5,427.5 12.5,426.5 13.5,426.5 14.5,426.5 15.5,427.5 16.5,428.5 17.5,428.5 18.5,428.5 19.5,428.5 20.5,428.5 21.5,428.5 22.5,428.5 23.5,428.5 24.5,428.5 25.5,428.5 26.5,428.5 27.5,428.5 28.5,428.5 29.5,428.5 30.5,428.5 31.5,428.5 32.5,428.5 33.5,428.5 34.5,427.5 35.5,426.5 36.5,426.5 37.5,425.5 38.5,425.5 39.5,426.5 40.5,427.5 41.5,428.5 42.5,428.5 43.5,428.5 44.5,428.5 45.5,428.5 46.5,428.5 47.5,428.5 48.5,428.5 49.5,427.5 50.5,427.5 51.5,426.5 52.5,427.5 53.5,428.5 54.5,429.5 55.5,429.5 56.5,429.5 57.5,429.5 58.5,429.5 59.5,429.5 60.5,429.5 61.5,429.5 62.5,428.5 63.5,428.5 64.5,428.5 65.5,428.5 66.5,428.5 67.5,428.5 68.5,428.5 69.5,428.5 70.5,428.5 71.5,428.5 72.5,427.5 73.5,425.5 74.5,425.5 75.5,425.5 76.5,426.5 77.5,428.5 78.5,428.5 79.5,428.5 80.5,428.5 81.5,428.5 82.5,428.5 83.5,428.5 84.5,427.5 85.5,426.5 86.5,426.5 87.5,426.5 88.5,427.5 89.5,428.5 90.5,428.5 91.5,428.5 92.5,428.5 93.5,428.5 94.5,428.5 95.5,428.5 96.5,428.5 97.5,428.5 98.5,428.5 99.5,428.5 100.5,428.5 101.5,428.5 102.5,429.5 103.5,429.5 104.5,429.5 105.5,430.5 106.5,430.5 107.5,430.5 108.5,429.5 109.5,428.5 110.5,428.5 111.5,428.5 112.5,428.5 113.5,428.5 114.5,428.5 115.5,428.5 116.5,429.5 117.5,430.5 118.5,430.5 119.5,429.5 120.5,428.5 121.5,428.5 122.5,428.5 123.5,428.5 124.5,428.5 125.5,428.5 126.5,428.5" fill="none" stroke="#fff" stroke-width="1" clip-path="url(#cb)"/><polyline points="533.5,428.5 534.5,428.8 535.5,429.2 536.5,429.5 537.5,430.5 538.5,431.5 539.5,429.0 540.5,426.5 541.5,427.5 542.5,428.5 543.5,426.5 544.8,423.5 545.9,416.0 547.0,408.5 547.9,424.2 548.8,462.0 549.6,499.8 550.5,515.5 551.6,505.3 552.6,477.5 553.7,439.5 554.8,401.5 555.8,373.7 556.9,363.5 558.0,371.9 559.0,393.8 560.1,420.8 561.1,442.7 562.2,451.1 563.2,447.6 564.3,438.0 565.4,424.8 566.4,411.7 567.5,402.0 568.5,398.5 569.5,403.3 570.4,415.8 571.4,431.2 572.3,443.7 573.3,448.5 574.3,446.3 575.4,440.3 576.4,431.6 577.4,421.8 578.4,413.1 579.5,407.1 580.5,404.9 581.5,409.9 582.5,423.1 583.5,439.3 584.5,452.5 585.5,457.5 586.5,454.9 587.4,447.6 588.4,437.8 589.3,427.9 590.3,420.6 591.2,418.0 592.3,421.0 593.4,429.0 594.4,438.9 595.5,446.9 596.5,449.9 597.5,445.8 598.6,435.1 599.6,421.8 600.7,411.1 601.8,407.0 602.7,408.6 603.7,413.2 604.7,420.0 605.6,428.0 606.6,436.0 607.6,442.8 608.5,447.4 609.5,449.0 610.5,446.0 611.5,438.8 612.5,431.5 613.5,428.5 614.5,427.8 615.5,425.9 616.4,423.7 617.4,421.8 618.4,421.1 619.4,422.3 620.5,425.1 621.5,427.8 622.5,429.0 623.6,429.0 624.8,429.0 625.9,429.0 626.9,428.0 628.0,425.9 629.0,424.9 630.0,425.9 631.1,428.0 632.1,429.0 633.2,429.0 634.3,429.0 635.4,429.0 636.5,429.0 637.8,427.4 639.0,425.9 639.9,426.0 640.8,426.2 641.6,426.4 642.5,426.5 643.5,426.7 644.5,427.4 645.5,428.3 646.5,429.3 647.5,430.2 648.5,430.9 649.5,431.1 650.5,430.9 651.5,430.4 652.5,429.7 653.5,429.2 654.5,429.0 655.5,429.1 656.4,429.2 657.4,429.5 658.3,429.8 659.3,429.9 660.2,430.0 661.2,429.8 662.1,429.2 663.1,428.7 664.0,428.5 665.0,428.6 666.0,429.0 667.0,429.5 668.0,429.9 669.0,430.0 670.0,429.8 671.0,429.1 672.0,428.4 673.0,427.7 674.0,427.5 674.9,427.4 675.8,427.2 676.8,427.0 677.7,426.8 678.6,426.6 679.5,426.5 680.5,426.7 681.4,427.1 682.4,427.8 683.3,428.4 684.3,428.8 685.2,429.0" fill="none" stroke="#0000ff" stroke-width="1"/><polyline points="520.5,428.5 521.5,428.5 522.5,429.5 523.5,430.5 524.5,429.5 525.5,429.5 526.5,428.5 527.5,428.5 528.5,428.5 529.5,428.5 530.5,428.5 531.5,428.5 532.5,428.5 533.5,428.5 534.5,428.5 535.5,428.5 536.5,428.5 537.5,428.5 538.5,428.5 539.5,428.5 540.5,428.5 541.5,428.5 542.5,427.5 543.5,427.5 544.5,427.5 545.5,427.5 546.5,427.5 547.5,428.5 548.5,428.5 549.5,429.5 550.5,430.5 551.5,430.5 552.5,430.5 553.5,429.5 554.5,428.5 555.5,427.5 556.5,427.5 557.5,426.5 558.5,427.5 559.5,427.5 560.5,427.5 561.5,428.5 562.5,428.5 563.5,428.5 564.5,428.5 565.5,428.5 566.5,428.5 567.5,428.5 568.5,428.5 569.5,428.5 570.5,428.5 571.5,428.5 572.5,428.5 573.5,428.5 574.5,427.5 575.5,427.5 576.5,427.5 577.5,427.5 578.5,427.5 579.5,427.5 580.5,426.5 581.5,426.5 582.5,426.5 583.5,426.5 584.5,426.5 585.5,426.5 586.5,426.5 587.5,426.5 588.5,426.5 589.5,426.5 590.5,426.5 591.5,426.5 592.5,426.5 593.5,426.5 594.5,426.5 595.5,426.5 596.5,426.5 597.5,426.5 598.5,426.5 599.5,426.5 600.5,426.5 601.5,426.5 602.5,426.5 603.5,426.5 604.5,426.5 605.5,426.5 606.5,426.5 607.5,426.5 608.5,426.5 609.5,426.5 610.5,426.5 611.5,427.5 612.5,427.5 613.5,427.5 614.5,428.5 615.5,428.5 616.5,428.5 617.5,428.5 618.5,428.5 619.5,428.5 620.5,428.5 621.5,428.5 622.5,429.5 623.5,429.5 624.5,429.5 625.5,429.5 626.5,429.5 627.5,429.5 628.5,429.5 629.5,430.5 630.5,430.5 631.5,430.5 632.5,429.5 633.5,428.5 634.5,428.5 635.5,428.5 636.5,427.5 637.5,427.5 638.5,427.5 639.5,426.5 640.5,427.5 641.5,429.5 642.5,430.5 643.5,430.5 644.5,428.5 645.5,427.5 646.5,425.5 647.5,425.5 648.5,426.5 649.5,428.5 650.5,429.5 651.5,429.5 652.5,429.5 653.5,429.5 654.5,429.5 655.5,430.5 656.5,429.5 657.5,429.5 658.5,428.5 659.5,427.5 660.5,426.5 661.5,426.5 662.5,426.5 663.5,427.5 664.5,428.5 665.5,428.5 666.5,428.5 667.5,428.5 668.5,428.5 669.5,428.5 670.5,428.5 671.5,428.5 672.5,427.5 673.5,426.5 674.5,426.5 675.5,426.5 676.5,427.5 677.5,427.5 678.5,427.5 679.5,427.5 680.5,427.5 681.5,427.5 682.5,427.5 683.5,427.5 684.5,426.5 685.5,425.5 686.5,425.5 687.5,425.5 688.5,426.5 689.5,427.5" fill="none" stroke="#000" stroke-width="1"/><rect x="520" y="110" width="1" height="424" fill="url(#dash)"/><defs><pattern id="dash" x="0" y="110" width="1" height="8" patternUnits="userSpaceOnUse"><rect x="0" y="0" width="1" height="4" fill="#0000ff"/></pattern></defs><rect x="682" y="110" width="1" height="424" fill="url(#dash)"/></svg><div class="sb" style="left:784px;top:110px"><svg class="a" style="left:0;top:0" width="14" height="14"><path d="M3,9 L10,9 L6.5,5.5 Z" fill="#808080"/><rect x="4" y="10" width="7" height="1" fill="#fff"/></svg></div><div class="sb" style="left:784px;top:306px"><svg class="a" style="left:0;top:0" width="14" height="14"><path d="M3,5 L10,5 L6.5,8.5 Z" fill="#808080"/><path d="M7,9 L11,5" stroke="#fff"/></svg></div><div class="sb" style="left:784px;top:322px"><svg class="a" style="left:0;top:0" width="14" height="14"><path d="M3,9 L10,9 L6.5,5.5 Z" fill="#808080"/><rect x="4" y="10" width="7" height="1" fill="#fff"/></svg></div><div class="sb" style="left:784px;top:518px"><svg class="a" style="left:0;top:0" width="14" height="14"><path d="M3,5 L10,5 L6.5,8.5 Z" fill="#808080"/><path d="M7,9 L11,5" stroke="#fff"/></svg></div><div class="a" style="left:0;top:534px;width:800px;height:22px;background:#c0c0c0;border-top:1px solid #808080;border-bottom:1px solid #808080;border-left:1px solid #808080"></div><div class="t" style="left:3.5px;top:541px;letter-spacing:-0.15px">00:05.454</div><div class="a" style="left:97px;top:535px;width:1px;height:20px;background:#000"></div><div class="t" style="left:100.5px;top:541px;letter-spacing:-0.15px">00:05.456</div><div class="a" style="left:194px;top:535px;width:1px;height:20px;background:#000"></div><div class="t" style="left:197.5px;top:541px;letter-spacing:-0.15px">00:05.459</div><div class="a" style="left:291px;top:535px;width:1px;height:20px;background:#000"></div><div class="t" style="left:294.5px;top:541px;letter-spacing:-0.15px">00:05.461</div><div class="a" style="left:388px;top:535px;width:1px;height:20px;background:#000"></div><div class="t" style="left:391.5px;top:541px;letter-spacing:-0.15px">00:05.463</div><div class="a" style="left:485px;top:535px;width:1px;height:20px;background:#000"></div><div class="t" style="left:488.5px;top:541px;letter-spacing:-0.15px">00:05.465</div><div class="a" style="left:582px;top:535px;width:1px;height:20px;background:#000"></div><div class="t" style="left:585.5px;top:541px;letter-spacing:-0.15px">00:05.467</div><div class="a" style="left:679px;top:535px;width:1px;height:20px;background:#000"></div><div class="t" style="left:682.5px;top:541px;letter-spacing:-0.15px">00:05.470</div><div class="a" style="left:776px;top:535px;width:1px;height:20px;background:#000"></div><div class="t" style="left:779.5px;top:541px;letter-spacing:-0.15px">00:05.472</div><div class="a chk" style="left:0;top:556px;width:800px;height:16px"></div><div class="sb" style="left:0;top:556px"><svg class="a" style="left:0;top:0" width="14" height="14"><path d="M9,3 L9,11 L5,7 Z" fill="#000"/></svg></div><div class="sb" style="left:60px;top:556px;width:8px"></div><div class="sb" style="left:785px;top:556px"><svg class="a" style="left:0;top:0" width="14" height="14"><path d="M5,3 L5,11 L9,7 Z" fill="#000"/></svg></div><div class="a" style="left:0;top:572px;width:800px;height:1px;background:#fff"></div><div class="a" style="left:0;top:573px;width:800px;height:3px;background:#c0c0c0"></div></body></html>
